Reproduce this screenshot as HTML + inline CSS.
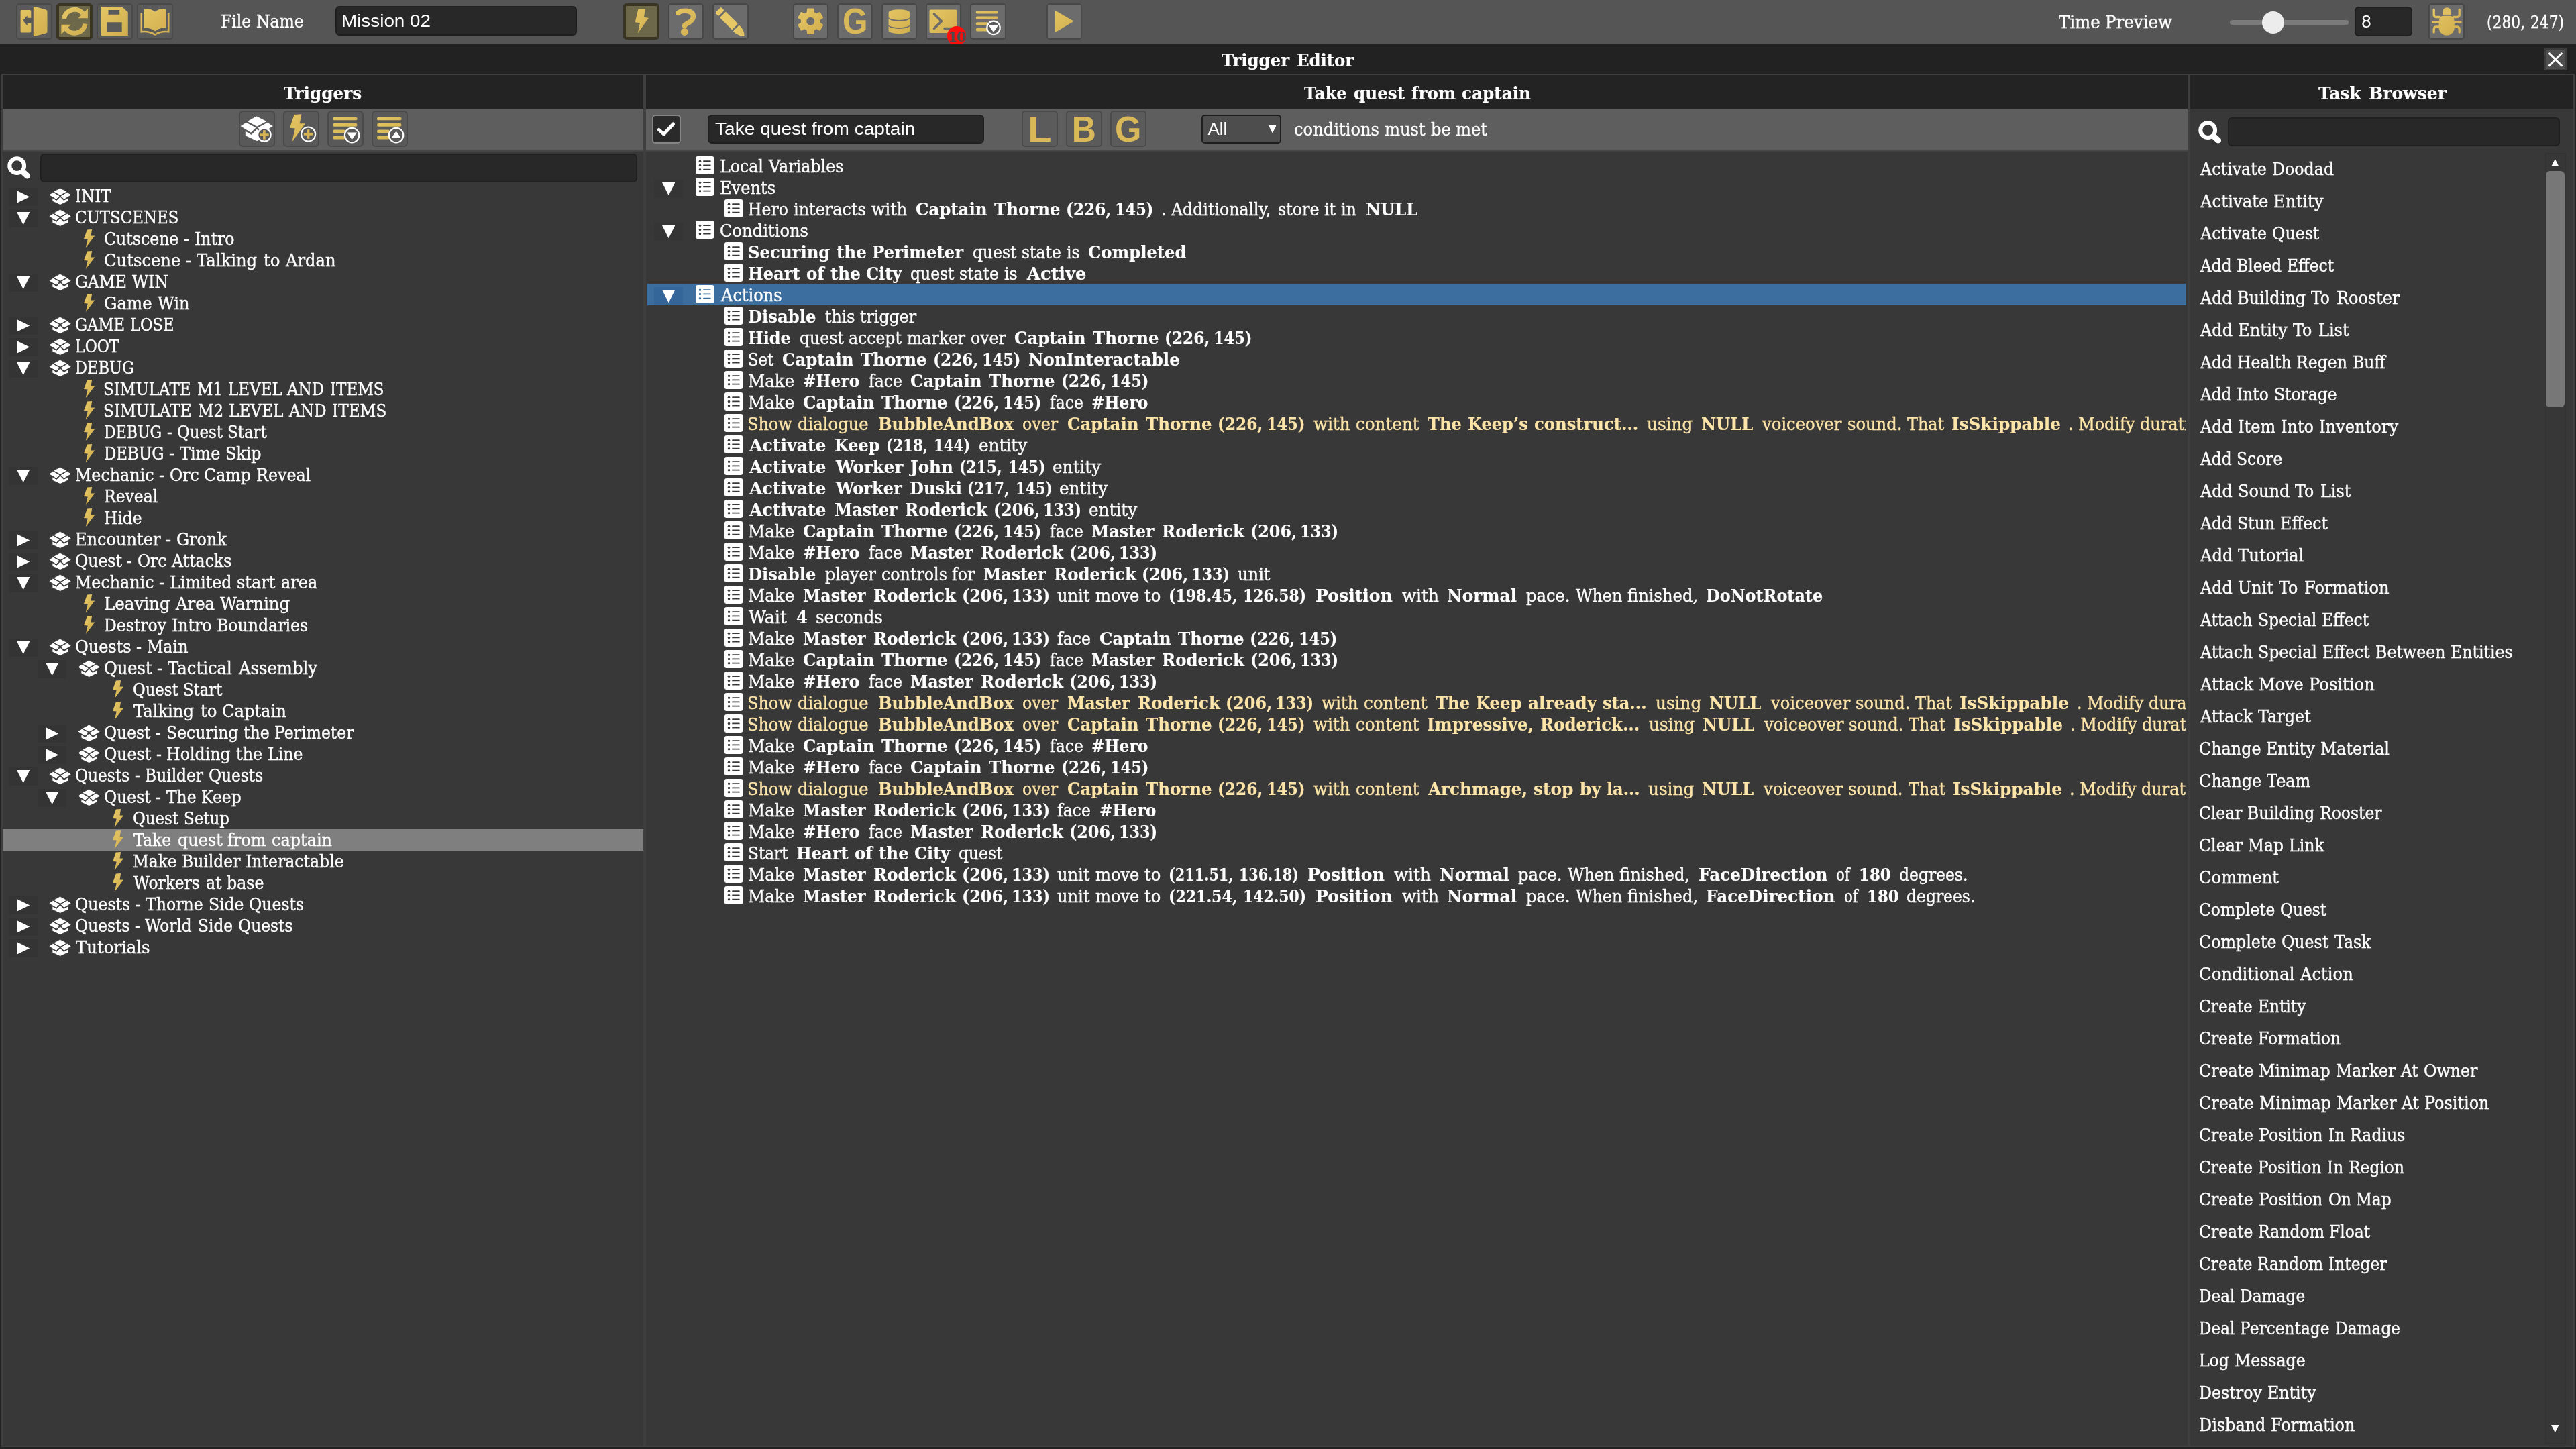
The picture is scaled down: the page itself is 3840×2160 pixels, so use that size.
<!DOCTYPE html>
<html lang="en"><head><meta charset="utf-8"><title>Trigger Editor</title>
<style>
html,body{margin:0;padding:0;background:#222222;}
body{width:3840px;height:2160px;position:relative;overflow:hidden;font-family:'DejaVu Serif','Liberation Serif',serif;color:#fff;}
.t{position:absolute;white-space:nowrap;transform-origin:0 50%;display:block;-webkit-text-stroke:0.45px currentColor;}
</style></head>
<body>
<svg width="0" height="0" style="position:absolute"><defs>
<linearGradient id="gold" gradientUnits="userSpaceOnUse" x1="4" y1="4" x2="50" y2="50"><stop offset="0" stop-color="#e6c866"/><stop offset="1" stop-color="#cfab4c"/></linearGradient>
<linearGradient id="golds" x1="0" y1="0" x2="1" y2="1"><stop offset="0" stop-color="#e6c866"/><stop offset="1" stop-color="#cfab4c"/></linearGradient>
</defs></svg>
<div id="app" style="position:absolute;left:0;top:0;width:3840px;height:2160px;will-change:transform">
<div style="position:absolute;left:0px;top:0px;width:3840px;height:65px;background:#555555;"></div>
<div style="position:absolute;left:24px;top:5px;width:53.5px;height:53.5px;box-sizing:border-box;background:#5a5a5a;border:2px solid #494949;border-radius:5px;overflow:hidden"></div>
<div style="position:absolute;left:84px;top:5px;width:53.5px;height:53.5px;box-sizing:border-box;background:#6d6849;border:4px solid #3a3422;border-radius:5px;overflow:hidden"></div>
<div style="position:absolute;left:144.3px;top:5px;width:53.5px;height:53.5px;box-sizing:border-box;background:#5a5a5a;border:2px solid #494949;border-radius:5px;overflow:hidden"></div>
<div style="position:absolute;left:204.3px;top:5px;width:53.5px;height:53.5px;box-sizing:border-box;background:#5a5a5a;border:2px solid #494949;border-radius:5px;overflow:hidden"></div>
<svg style="position:absolute;left:24px;top:5px;" width="54" height="54" viewBox="0 0 54 54"><path fill="url(#gold)" fill-rule="evenodd" d="M8.6 10.1 L20.3 10.1 Q22.3 10.1 22.3 12.1 L22.3 21.7 L16.7 21.7 L16.7 18.2 L10.2 25.8 L16.7 33.3 L16.7 29.8 L22.3 29.8 L22.3 41.4 Q22.3 43.4 20.3 43.4 L8.6 43.4 Q6.6 43.4 6.6 41.4 L6.6 12.1 Q6.6 10.1 8.6 10.1 Z"/><path fill="url(#gold)" d="M25.8 7 Q25.8 4.5 28.3 5 L44.5 9.5 Q46.5 10 46.5 12 L46.5 42 Q46.5 44 44.5 44.5 L28.3 48.7 Q25.8 49.2 25.8 46.7 Z"/></svg>
<svg style="position:absolute;left:84px;top:5px;" width="54" height="54" viewBox="0 0 54 54"><g fill="none" stroke="url(#gold)" stroke-width="7"><path d="M11.5 23 A16 16 0 0 1 40 15.5"/><path d="M43 30.5 A16 16 0 0 1 14.5 38"/></g><path fill="url(#gold)" d="M46.9 8 L46.9 22.3 L32.6 22.3 Z"/><path fill="url(#gold)" d="M7.4 46 L7.4 31.7 L21.7 31.7 Z"/></svg>
<svg style="position:absolute;left:144.3px;top:5px;" width="54" height="54" viewBox="0 0 54 54"><path fill="url(#gold)" fill-rule="evenodd" d="M7 5 L38 5 L46.8 13.5 L46.8 48 L7 48 Z M17.5 10 L17.5 16.7 L34.2 16.7 L34.2 10 Z M15.7 28.3 L15.7 43 L37.7 43 L37.7 28.3 Z"/></svg>
<svg style="position:absolute;left:204.3px;top:5px;" width="54" height="54" viewBox="0 0 54 54"><path fill="url(#gold)" d="M11 8.5 Q20 7 27 12.5 Q34 7 43 8.5 L43 37 Q34 36 27 41.5 Q20 36 11 37 Z"/><path fill="none" stroke="url(#gold)" stroke-width="2.6" d="M6.8 15 L6.8 42.3 Q18 41 27 46.5 Q36 41 47.2 42.3 L47.2 15"/></svg>
<span class="t" style="left:328.90px;top:0.3px;height:65px;line-height:65px;font-size:26px;transform:scaleX(0.9001);">File</span>
<span class="t" style="left:381.76px;top:0.3px;height:65px;line-height:65px;font-size:26px;transform:scaleX(0.9035);">Name</span>
<div style="position:absolute;left:500px;top:9px;width:360px;height:44px;box-sizing:border-box;background:#282828;border:2px solid #1e1e1e;border-radius:6px;overflow:hidden"></div>
<span class="t" style="left:509.36px;top:9.0px;height:44px;line-height:44px;font-size:26px;transform:scaleX(1.0705);font-family:'Liberation Sans','DejaVu Sans',sans-serif;-webkit-text-stroke-width:0;">Mission 02</span>
<div style="position:absolute;left:929px;top:5px;width:53.5px;height:53.5px;box-sizing:border-box;background:#6d6849;border:4px solid #3a3422;border-radius:5px;overflow:hidden"></div>
<div style="position:absolute;left:995.5px;top:5px;width:53.5px;height:53.5px;box-sizing:border-box;background:#6c6c6c;border:2px solid #484848;border-radius:5px;overflow:hidden"></div>
<div style="position:absolute;left:1062px;top:5px;width:53.5px;height:53.5px;box-sizing:border-box;background:#6c6c6c;border:2px solid #484848;border-radius:5px;overflow:hidden"></div>
<div style="position:absolute;left:1181.5px;top:5px;width:53.5px;height:53.5px;box-sizing:border-box;background:#6c6c6c;border:2px solid #484848;border-radius:5px;overflow:hidden"></div>
<div style="position:absolute;left:1247.5px;top:5px;width:53.5px;height:53.5px;box-sizing:border-box;background:#6c6c6c;border:2px solid #484848;border-radius:5px;overflow:hidden"></div>
<div style="position:absolute;left:1313.5px;top:5px;width:53.5px;height:53.5px;box-sizing:border-box;background:#6c6c6c;border:2px solid #484848;border-radius:5px;overflow:hidden"></div>
<div style="position:absolute;left:1379.7px;top:5px;width:53.5px;height:53.5px;box-sizing:border-box;background:#6c6c6c;border:2px solid #484848;border-radius:5px;overflow:hidden"></div>
<div style="position:absolute;left:1446px;top:5px;width:53.5px;height:53.5px;box-sizing:border-box;background:#6c6c6c;border:2px solid #484848;border-radius:5px;overflow:hidden"></div>
<div style="position:absolute;left:1559.5px;top:5px;width:53.5px;height:53.5px;box-sizing:border-box;background:#6c6c6c;border:2px solid #484848;border-radius:5px;overflow:hidden"></div>
<svg style="position:absolute;left:929px;top:5px;" width="54" height="54" viewBox="0 0 54 54"><path fill="url(#gold)" d="M22.3 9.1 L32.9 8.6 L30.9 20.7 L38 21.7 L21.8 44.5 L24.8 29.3 L17.7 28.3 Z"/></svg>
<svg style="position:absolute;left:995.5px;top:5px;" width="54" height="54" viewBox="0 0 54 54"><path fill="none" stroke="url(#gold)" stroke-width="7.4" stroke-linecap="round" d="M14.8 14.4 Q20 10.6 26.6 11.2 Q37.6 12 37.4 20.2 Q37 25.5 29.5 29.5 Q24.6 32 24.4 33.4"/><circle cx="24.4" cy="42.4" r="5.5" fill="url(#gold)"/></svg>
<svg style="position:absolute;left:1062px;top:5px;" width="54" height="54" viewBox="0 0 54 54"><g transform="translate(27.2,28.6) rotate(-45)" fill="url(#gold)"><rect x="-6.2" y="-26.5" width="12.4" height="7.2" rx="2.2"/><rect x="-6.2" y="-16.6" width="12.4" height="25.6" rx="1"/><path d="M-6.2 11.6 L6.2 11.6 L6.2 16 Q5 24 0.8 28 Q0 28.8 -0.8 28 Q-5 24 -6.2 16 Z"/></g></svg>
<svg style="position:absolute;left:1181.5px;top:5px;" width="54" height="54" viewBox="0 0 54 54"><path fill="url(#gold)" stroke="url(#gold)" stroke-width="2.5" stroke-linejoin="round" fill-rule="evenodd" d="M21.89 14.15 L22.29 8.84 L30.31 8.84 L30.71 14.15 L35.06 16.66 L39.84 14.35 L43.86 21.30 L39.46 24.29 L39.46 29.31 L43.86 32.30 L39.84 39.25 L35.06 36.94 L30.71 39.45 L30.31 44.76 L22.29 44.76 L21.89 39.45 L17.54 36.94 L12.76 39.25 L8.74 32.30 L13.14 29.31 L13.14 24.29 L8.74 21.30 L12.76 14.35 L17.54 16.66 Z M33.6 26.8 A7.3 7.3 0 1 0 19 26.8 A7.3 7.3 0 1 0 33.6 26.8 Z"/></svg>
<div style="position:absolute;left:1247.5px;top:5px;width:53.5px;height:53.5px;text-align:center;line-height:53px;font-family:'Liberation Sans','DejaVu Sans',sans-serif;font-weight:bold;font-size:54.5px;color:#d8b857;transform:scaleX(0.885)">G</div>
<svg style="position:absolute;left:1313.5px;top:5px;" width="54" height="54" viewBox="0 0 54 54"><path fill="url(#gold)" d="M10.599999999999998 14 A15.8 4.8 0 0 1 42.2 14 L42.2 20.2 A15.8 4.8 0 0 1 10.599999999999998 20.2 Z"/><path fill="url(#gold)" d="M10.599999999999998 22 A15.8 4.8 0 0 0 42.2 22 L42.2 31.4 A15.8 4.8 0 0 1 10.599999999999998 31.4 Z"/><path fill="url(#gold)" d="M10.599999999999998 33.2 A15.8 4.8 0 0 0 42.2 33.2 L42.2 40.4 A15.8 4.8 0 0 1 10.599999999999998 40.4 Z"/></svg>
<svg style="position:absolute;left:1379.7px;top:5px;" width="54" height="54" viewBox="0 0 54 54"><rect x="5.5" y="9.6" width="41.3" height="34.4" rx="2.5" fill="url(#gold)"/><path fill="none" stroke="#6c6c6c" stroke-width="3.6" stroke-linecap="round" stroke-linejoin="round" d="M12.5 16 L23.5 26.8 L12.5 37.5"/><path stroke="#6c6c6c" stroke-width="3.6" stroke-linecap="round" d="M28 37.5 L40 37.5"/></svg>
<svg style="position:absolute;left:1446px;top:5px;" width="54" height="54" viewBox="0 0 54 54"><rect x="8.8" y="10.899999999999999" width="33.2" height="4.6" rx="2.2" fill="url(#gold)"/><rect x="8.8" y="19.4" width="33.2" height="4.6" rx="2.2" fill="url(#gold)"/><rect x="8.8" y="28.2" width="18.7" height="4.6" rx="2.2" fill="url(#gold)"/><rect x="8.8" y="36.800000000000004" width="18.7" height="4.6" rx="2.2" fill="url(#gold)"/><circle cx="35" cy="36.4" r="9.700000000000001" fill="#5c5c5c" stroke="#fff" stroke-width="2.2"/><path fill="#fff" d="M27.6 32.4 L42.4 32.4 L35 43.0 Z"/></svg>
<svg style="position:absolute;left:1559.5px;top:5px;" width="54" height="54" viewBox="0 0 54 54"><path fill="url(#gold)" d="M12.6 10.6 L40.8 26.8 L12.6 43.4 Z"/></svg>
<div style="position:absolute;left:1411.8px;top:39.3px;width:28.4px;height:25.7px;overflow:hidden"><div style="width:28.4px;height:28.4px;border-radius:50%;background:#ff0e0e;text-align:center;line-height:32px;font-size:21px;font-weight:bold;color:#4b4b4b;letter-spacing:-1.5px;font-family:'DejaVu Serif','Liberation Serif',serif">10</div></div>
<span class="t" style="left:3068.60px;top:0.7px;height:65px;line-height:65px;font-size:26px;transform:scaleX(0.9401);">Time</span>
<span class="t" style="left:3138.47px;top:0.7px;height:65px;line-height:65px;font-size:26px;transform:scaleX(0.9450);">Preview</span>
<div style="position:absolute;left:3324px;top:30px;width:177px;height:7.4px;background:#7b7b7b;border-radius:4px"></div>
<div style="position:absolute;left:3371.6px;top:16.7px;width:33.6px;height:33.6px;background:#ececec;border-radius:50%"></div>
<div style="position:absolute;left:3510px;top:10px;width:86px;height:44px;box-sizing:border-box;background:#282828;border:2px solid #1e1e1e;border-radius:6px;overflow:hidden"></div>
<span class="t" style="left:3520.20px;top:10.0px;height:44px;line-height:44px;font-size:26px;transform:scaleX(1.0000);font-family:'Liberation Sans','DejaVu Sans',sans-serif;-webkit-text-stroke-width:0;">8</span>
<div style="position:absolute;left:3620.3px;top:5px;width:53.5px;height:53.5px;box-sizing:border-box;background:#6c6c6c;border:2px solid #484848;border-radius:5px;overflow:hidden"></div>
<svg style="position:absolute;left:3620.3px;top:5px;" width="54" height="54" viewBox="0 0 54 54"><path fill="url(#gold)" d="M21.2 17.4 L21.2 12.5 A6.3 6.3 0 0 1 33.8 12.5 L33.8 17.4 Z"/><path fill="url(#gold)" d="M15.6 30 Q15.6 18.8 22 18.8 L32.4 18.8 Q38.8 18.8 38.8 30 L38.8 36 A11.6 11.6 0 0 1 15.6 36 Z"/><g fill="none" stroke="url(#gold)" stroke-width="3.3" stroke-linecap="round" stroke-linejoin="round"><path d="M8.2 9.5 L8.2 17 Q8.2 20.5 12 20.5 L17 20.5"/><path d="M46.2 9.5 L46.2 17 Q46.2 20.5 42.4 20.5 L37.4 20.5"/><path d="M6.5 28 L16 28"/><path d="M38.4 28 L48 28"/><path d="M8.2 43 L8.2 39 Q8.2 35 12 35 L17 35"/><path d="M46.2 43 L46.2 39 Q46.2 35 42.4 35 L37.4 35"/></g></svg>
<span class="t" style="left:3706.82px;top:1.0px;height:65px;line-height:65px;font-size:26px;transform:scaleX(0.8402);">(280,</span>
<span class="t" style="left:3771.59px;top:1.0px;height:65px;line-height:65px;font-size:26px;transform:scaleX(0.8354);">247)</span>
<span class="t" style="left:1821.40px;top:67.9px;height:44px;line-height:44px;font-size:26px;transform:scaleX(0.9385);font-weight:bold;-webkit-text-stroke-width:0.2px;">Trigger</span>
<span class="t" style="left:1933.08px;top:67.9px;height:44px;line-height:44px;font-size:26px;transform:scaleX(0.9362);font-weight:bold;-webkit-text-stroke-width:0.2px;">Editor</span>
<div style="position:absolute;left:3793px;top:72px;width:32.5px;height:33px;box-sizing:border-box;background:#4f4f4f;border:2px solid #3c3c3c;border-radius:0px;overflow:hidden"><svg width="29" height="29" viewBox="0 0 29 29" style="position:absolute;left:0;top:0"><path d="M4.5 5 L24.3 24.5 M24.3 5 L4.5 24.5" stroke="#fff" stroke-width="3"/></svg></div>
<div style="position:absolute;left:2px;top:110px;width:959px;height:2047px;background:#383838;box-sizing:border-box;border:2px solid #3f3f3f"></div>
<div style="position:absolute;left:4px;top:112px;width:955px;height:50px;background:#232323;"></div>
<div style="position:absolute;left:961px;top:110px;width:2302px;height:2047px;background:#383838;box-sizing:border-box;border:2px solid #3f3f3f"></div>
<div style="position:absolute;left:963px;top:112px;width:2298px;height:50px;background:#232323;"></div>
<div style="position:absolute;left:3263px;top:110px;width:575px;height:2047px;background:#383838;box-sizing:border-box;border:2px solid #3f3f3f"></div>
<div style="position:absolute;left:3265px;top:112px;width:571px;height:50px;background:#232323;"></div>
<div style="position:absolute;left:4px;top:162px;width:955px;height:61px;background:#5e5e5e;"></div>
<div style="position:absolute;left:4px;top:223px;width:955px;height:3px;background:linear-gradient(#505050,#404040);"></div>
<div style="position:absolute;left:963px;top:162px;width:2298px;height:61px;background:#5e5e5e;"></div>
<div style="position:absolute;left:963px;top:223px;width:2298px;height:3px;background:linear-gradient(#505050,#404040);"></div>
<span class="t" style="left:423.00px;top:113.8px;height:50px;line-height:50px;font-size:26px;transform:scaleX(0.9496);font-weight:bold;-webkit-text-stroke-width:0.2px;">Triggers</span>
<span class="t" style="left:1943.50px;top:113.8px;height:50px;line-height:50px;font-size:26px;transform:scaleX(0.9337);font-weight:bold;-webkit-text-stroke-width:0.2px;">Take</span>
<span class="t" style="left:2018.46px;top:113.8px;height:50px;line-height:50px;font-size:26px;transform:scaleX(0.9487);font-weight:bold;-webkit-text-stroke-width:0.2px;">quest</span>
<span class="t" style="left:2103.51px;top:113.8px;height:50px;line-height:50px;font-size:26px;transform:scaleX(0.9487);font-weight:bold;-webkit-text-stroke-width:0.2px;">from</span>
<span class="t" style="left:2178.57px;top:113.8px;height:50px;line-height:50px;font-size:26px;transform:scaleX(0.9487);font-weight:bold;-webkit-text-stroke-width:0.2px;">captain</span>
<span class="t" style="left:3456.00px;top:113.8px;height:50px;line-height:50px;font-size:26px;transform:scaleX(0.9581);font-weight:bold;-webkit-text-stroke-width:0.2px;">Task</span>
<span class="t" style="left:3531.10px;top:113.8px;height:50px;line-height:50px;font-size:26px;transform:scaleX(0.9637);font-weight:bold;-webkit-text-stroke-width:0.2px;">Browser</span>
<div style="position:absolute;left:356.2px;top:165px;width:53.6px;height:53.6px;box-sizing:border-box;background:#595959;border:2px solid #4a4a4a;border-radius:6px;overflow:hidden"></div>
<div style="position:absolute;left:422.2px;top:165px;width:53.6px;height:53.6px;box-sizing:border-box;background:#595959;border:2px solid #4a4a4a;border-radius:6px;overflow:hidden"></div>
<div style="position:absolute;left:488.2px;top:165px;width:53.6px;height:53.6px;box-sizing:border-box;background:#595959;border:2px solid #4a4a4a;border-radius:6px;overflow:hidden"></div>
<div style="position:absolute;left:554.2px;top:165px;width:53.6px;height:53.6px;box-sizing:border-box;background:#595959;border:2px solid #4a4a4a;border-radius:6px;overflow:hidden"></div>
<svg style="position:absolute;left:356.2px;top:165px;" width="54" height="54" viewBox="0 0 54 54"><g transform="translate(2.6,8.2) scale(1.5)"><path fill="#fff" stroke="#595959" stroke-width="0.8" stroke-linejoin="round" d="M16 -0.4 L26.6 5.2 L16.3 10.8 L5.9 5.2 Z"/><path fill="#fff" stroke="#595959" stroke-width="0.8" stroke-linejoin="round" d="M5.6 5.8 L15.8 11.4 L10.4 16.8 L0.2 10.6 Q-0.6 10 0.2 9.4 Z"/><path fill="#fff" stroke="#595959" stroke-width="0.8" stroke-linejoin="round" d="M26.8 5.8 L32 9.4 Q32.8 10 32 10.6 L22 16.8 L16.6 11.4 Z"/><path fill="#fff" stroke="#595959" stroke-width="0.8" stroke-linejoin="round" d="M4.4 14.2 L10.7 18 L16.2 12.5 L21.7 18 L28 14.2 L28 19.5 L16.2 25 L4.4 19.5 Z"/></g><circle cx="37.9" cy="36" r="9.700000000000001" fill="#595959" stroke="#fff" stroke-width="2.2"/><path d="M31.099999999999998 36 L44.699999999999996 36 M37.9 29.2 L37.9 42.8" stroke="url(#gold)" stroke-width="3.6"/></svg>
<svg style="position:absolute;left:422.2px;top:165px;" width="54" height="54" viewBox="0 0 54 54"><path fill="url(#gold)" d="M16.5 6 L27.5 5.2 L24.7 19.3 L33 19.3 L13.3 46.5 L17.8 26.5 L10 25.8 Z"/><circle cx="37.6" cy="35" r="10.5" fill="#595959" stroke="#fff" stroke-width="2.2"/><path d="M30.8 35 L44.4 35 M37.6 28.2 L37.6 41.8" stroke="url(#gold)" stroke-width="3.6"/></svg>
<svg style="position:absolute;left:488.2px;top:165px;" width="54" height="54" viewBox="0 0 54 54"><rect x="8" y="9.65" width="36.5" height="4.7" rx="2.2" fill="url(#gold)"/><rect x="8" y="19.049999999999997" width="36.5" height="4.7" rx="2.2" fill="url(#gold)"/><rect x="8" y="28.45" width="19" height="4.7" rx="2.2" fill="url(#gold)"/><rect x="8" y="37.85" width="19" height="4.7" rx="2.2" fill="url(#gold)"/><circle cx="36.6" cy="36.6" r="10.700000000000001" fill="#595959" stroke="#fff" stroke-width="2.2"/><path fill="#fff" d="M29.200000000000003 32.6 L44.0 32.6 L36.6 43.2 Z"/></svg>
<svg style="position:absolute;left:554.2px;top:165px;" width="54" height="54" viewBox="0 0 54 54"><rect x="8" y="9.65" width="36.5" height="4.7" rx="2.2" fill="url(#gold)"/><rect x="8" y="19.049999999999997" width="36.5" height="4.7" rx="2.2" fill="url(#gold)"/><rect x="8" y="28.45" width="19" height="4.7" rx="2.2" fill="url(#gold)"/><rect x="8" y="37.85" width="19" height="4.7" rx="2.2" fill="url(#gold)"/><circle cx="36.6" cy="36.6" r="10.700000000000001" fill="#595959" stroke="#fff" stroke-width="2.2"/><path fill="#fff" d="M36.6 30.6 L44.0 41.0 L29.200000000000003 41.0 Z"/></svg>
<svg style="position:absolute;left:10.5px;top:233.2px;" width="40" height="38" viewBox="0 0 40 38"><circle cx="14.2" cy="14.2" r="10.9" fill="none" stroke="#fff" stroke-width="6"/><path d="M23 23 L29.8 29.2" stroke="#fff" stroke-width="8.6" stroke-linecap="round"/></svg>
<div style="position:absolute;left:60px;top:229px;width:890px;height:42.6px;box-sizing:border-box;background:#282828;border:2px solid #202020;border-radius:6px;overflow:hidden"></div>
<div style="position:absolute;left:12.8px;top:280.1px;width:43px;height:27px;background:#343434;"></div><svg style="position:absolute;left:24.800000000000004px;top:284.20000000000005px;" width="19.2" height="18.8" viewBox="0 0 19.2 18.8"><path fill="#fff" d="M0 0 L19.2 9.4 L0 18.8 Z"/></svg>
<svg style="position:absolute;left:72.8px;top:280.2px;" width="33.4" height="26" viewBox="-0.5 -0.5 33.4 26"><path fill="#fff" stroke="#383838" stroke-width="0.9" stroke-linejoin="round" d="M16 -0.4 L26.6 5.2 L16.3 10.8 L5.9 5.2 Z"/><path fill="#fff" stroke="#383838" stroke-width="0.9" stroke-linejoin="round" d="M5.6 5.8 L15.8 11.4 L10.4 16.8 L0.2 10.6 Q-0.6 10 0.2 9.4 Z"/><path fill="#fff" stroke="#383838" stroke-width="0.9" stroke-linejoin="round" d="M26.8 5.8 L32 9.4 Q32.8 10 32 10.6 L22 16.8 L16.6 11.4 Z"/><path fill="#fff" stroke="#383838" stroke-width="0.9" stroke-linejoin="round" d="M4.4 14.2 L10.7 18 L16.2 12.5 L21.7 18 L28 14.2 L28 19.5 L16.2 25 L4.4 19.5 Z"/></svg>
<span class="t" style="left:111.72px;top:276.2px;height:32px;line-height:32px;font-size:26px;transform:scaleX(0.8840);">INIT</span>
<div style="position:absolute;left:12.8px;top:312.1px;width:43px;height:27px;background:#343434;"></div><svg style="position:absolute;left:24.700000000000006px;top:316.0px;" width="19.4" height="19.2" viewBox="0 0 19.4 19.2"><path fill="#fff" d="M0 0 L19.4 0 L9.7 19.2 Z"/></svg>
<svg style="position:absolute;left:72.8px;top:312.2px;" width="33.4" height="26" viewBox="-0.5 -0.5 33.4 26"><path fill="#fff" stroke="#383838" stroke-width="0.9" stroke-linejoin="round" d="M16 -0.4 L26.6 5.2 L16.3 10.8 L5.9 5.2 Z"/><path fill="#fff" stroke="#383838" stroke-width="0.9" stroke-linejoin="round" d="M5.6 5.8 L15.8 11.4 L10.4 16.8 L0.2 10.6 Q-0.6 10 0.2 9.4 Z"/><path fill="#fff" stroke="#383838" stroke-width="0.9" stroke-linejoin="round" d="M26.8 5.8 L32 9.4 Q32.8 10 32 10.6 L22 16.8 L16.6 11.4 Z"/><path fill="#fff" stroke="#383838" stroke-width="0.9" stroke-linejoin="round" d="M4.4 14.2 L10.7 18 L16.2 12.5 L21.7 18 L28 14.2 L28 19.5 L16.2 25 L4.4 19.5 Z"/></svg>
<span class="t" style="left:111.72px;top:308.2px;height:32px;line-height:32px;font-size:26px;transform:scaleX(0.8808);">CUTSCENES</span>
<svg style="position:absolute;left:125.2px;top:341.9px;" width="16.5" height="27.5" viewBox="0 0 16.5 27.5"><path fill="url(#golds)" d="M4.9 0.4 L12.1 0 L10.6 9.5 L16.3 9.5 L2.7 27.3 L5.7 14.4 L0 14 Z"/></svg>
<span class="t" style="left:154.89px;top:340.2px;height:32px;line-height:32px;font-size:26px;transform:scaleX(0.9088);">Cutscene</span>
<span class="t" style="left:274.03px;top:340.2px;height:32px;line-height:32px;font-size:26px;transform:scaleX(0.8968);">-</span>
<span class="t" style="left:289.71px;top:340.2px;height:32px;line-height:32px;font-size:26px;transform:scaleX(0.9091);">Intro</span>
<svg style="position:absolute;left:125.2px;top:373.9px;" width="16.5" height="27.5" viewBox="0 0 16.5 27.5"><path fill="url(#golds)" d="M4.9 0.4 L12.1 0 L10.6 9.5 L16.3 9.5 L2.7 27.3 L5.7 14.4 L0 14 Z"/></svg>
<span class="t" style="left:154.87px;top:372.2px;height:32px;line-height:32px;font-size:26px;transform:scaleX(0.9331);">Cutscene</span>
<span class="t" style="left:277.19px;top:372.2px;height:32px;line-height:32px;font-size:26px;transform:scaleX(0.9208);">-</span>
<span class="t" style="left:293.28px;top:372.2px;height:32px;line-height:32px;font-size:26px;transform:scaleX(0.9324);">Talking</span>
<span class="t" style="left:393.24px;top:372.2px;height:32px;line-height:32px;font-size:26px;transform:scaleX(0.9411);">to</span>
<span class="t" style="left:425.82px;top:372.2px;height:32px;line-height:32px;font-size:26px;transform:scaleX(0.9295);">Ardan</span>
<div style="position:absolute;left:12.8px;top:408.1px;width:43px;height:27px;background:#343434;"></div><svg style="position:absolute;left:24.700000000000006px;top:412.0px;" width="19.4" height="19.2" viewBox="0 0 19.4 19.2"><path fill="#fff" d="M0 0 L19.4 0 L9.7 19.2 Z"/></svg>
<svg style="position:absolute;left:72.8px;top:408.2px;" width="33.4" height="26" viewBox="-0.5 -0.5 33.4 26"><path fill="#fff" stroke="#383838" stroke-width="0.9" stroke-linejoin="round" d="M16 -0.4 L26.6 5.2 L16.3 10.8 L5.9 5.2 Z"/><path fill="#fff" stroke="#383838" stroke-width="0.9" stroke-linejoin="round" d="M5.6 5.8 L15.8 11.4 L10.4 16.8 L0.2 10.6 Q-0.6 10 0.2 9.4 Z"/><path fill="#fff" stroke="#383838" stroke-width="0.9" stroke-linejoin="round" d="M26.8 5.8 L32 9.4 Q32.8 10 32 10.6 L22 16.8 L16.6 11.4 Z"/><path fill="#fff" stroke="#383838" stroke-width="0.9" stroke-linejoin="round" d="M4.4 14.2 L10.7 18 L16.2 12.5 L21.7 18 L28 14.2 L28 19.5 L16.2 25 L4.4 19.5 Z"/></svg>
<span class="t" style="left:111.70px;top:404.2px;height:32px;line-height:32px;font-size:26px;transform:scaleX(0.9046);">GAME</span>
<span class="t" style="left:196.85px;top:404.2px;height:32px;line-height:32px;font-size:26px;transform:scaleX(0.9046);">WIN</span>
<svg style="position:absolute;left:125.2px;top:437.9px;" width="16.5" height="27.5" viewBox="0 0 16.5 27.5"><path fill="url(#golds)" d="M4.9 0.4 L12.1 0 L10.6 9.5 L16.3 9.5 L2.7 27.3 L5.7 14.4 L0 14 Z"/></svg>
<span class="t" style="left:154.86px;top:436.2px;height:32px;line-height:32px;font-size:26px;transform:scaleX(0.9386);">Game</span>
<span class="t" style="left:234.59px;top:436.2px;height:32px;line-height:32px;font-size:26px;transform:scaleX(0.9264);">Win</span>
<div style="position:absolute;left:12.8px;top:472.1px;width:43px;height:27px;background:#343434;"></div><svg style="position:absolute;left:24.800000000000004px;top:476.20000000000005px;" width="19.2" height="18.8" viewBox="0 0 19.2 18.8"><path fill="#fff" d="M0 0 L19.2 9.4 L0 18.8 Z"/></svg>
<svg style="position:absolute;left:72.8px;top:472.2px;" width="33.4" height="26" viewBox="-0.5 -0.5 33.4 26"><path fill="#fff" stroke="#383838" stroke-width="0.9" stroke-linejoin="round" d="M16 -0.4 L26.6 5.2 L16.3 10.8 L5.9 5.2 Z"/><path fill="#fff" stroke="#383838" stroke-width="0.9" stroke-linejoin="round" d="M5.6 5.8 L15.8 11.4 L10.4 16.8 L0.2 10.6 Q-0.6 10 0.2 9.4 Z"/><path fill="#fff" stroke="#383838" stroke-width="0.9" stroke-linejoin="round" d="M26.8 5.8 L32 9.4 Q32.8 10 32 10.6 L22 16.8 L16.6 11.4 Z"/><path fill="#fff" stroke="#383838" stroke-width="0.9" stroke-linejoin="round" d="M4.4 14.2 L10.7 18 L16.2 12.5 L21.7 18 L28 14.2 L28 19.5 L16.2 25 L4.4 19.5 Z"/></svg>
<span class="t" style="left:111.73px;top:468.2px;height:32px;line-height:32px;font-size:26px;transform:scaleX(0.8696);">GAME</span>
<span class="t" style="left:193.59px;top:468.2px;height:32px;line-height:32px;font-size:26px;transform:scaleX(0.8696);">LOSE</span>
<div style="position:absolute;left:12.8px;top:504.1px;width:43px;height:27px;background:#343434;"></div><svg style="position:absolute;left:24.800000000000004px;top:508.20000000000005px;" width="19.2" height="18.8" viewBox="0 0 19.2 18.8"><path fill="#fff" d="M0 0 L19.2 9.4 L0 18.8 Z"/></svg>
<svg style="position:absolute;left:72.8px;top:504.2px;" width="33.4" height="26" viewBox="-0.5 -0.5 33.4 26"><path fill="#fff" stroke="#383838" stroke-width="0.9" stroke-linejoin="round" d="M16 -0.4 L26.6 5.2 L16.3 10.8 L5.9 5.2 Z"/><path fill="#fff" stroke="#383838" stroke-width="0.9" stroke-linejoin="round" d="M5.6 5.8 L15.8 11.4 L10.4 16.8 L0.2 10.6 Q-0.6 10 0.2 9.4 Z"/><path fill="#fff" stroke="#383838" stroke-width="0.9" stroke-linejoin="round" d="M26.8 5.8 L32 9.4 Q32.8 10 32 10.6 L22 16.8 L16.6 11.4 Z"/><path fill="#fff" stroke="#383838" stroke-width="0.9" stroke-linejoin="round" d="M4.4 14.2 L10.7 18 L16.2 12.5 L21.7 18 L28 14.2 L28 19.5 L16.2 25 L4.4 19.5 Z"/></svg>
<span class="t" style="left:111.75px;top:500.2px;height:32px;line-height:32px;font-size:26px;transform:scaleX(0.8479);">LOOT</span>
<div style="position:absolute;left:12.8px;top:536.1px;width:43px;height:27px;background:#343434;"></div><svg style="position:absolute;left:24.700000000000006px;top:540.0px;" width="19.4" height="19.2" viewBox="0 0 19.4 19.2"><path fill="#fff" d="M0 0 L19.4 0 L9.7 19.2 Z"/></svg>
<svg style="position:absolute;left:72.8px;top:536.2px;" width="33.4" height="26" viewBox="-0.5 -0.5 33.4 26"><path fill="#fff" stroke="#383838" stroke-width="0.9" stroke-linejoin="round" d="M16 -0.4 L26.6 5.2 L16.3 10.8 L5.9 5.2 Z"/><path fill="#fff" stroke="#383838" stroke-width="0.9" stroke-linejoin="round" d="M5.6 5.8 L15.8 11.4 L10.4 16.8 L0.2 10.6 Q-0.6 10 0.2 9.4 Z"/><path fill="#fff" stroke="#383838" stroke-width="0.9" stroke-linejoin="round" d="M26.8 5.8 L32 9.4 Q32.8 10 32 10.6 L22 16.8 L16.6 11.4 Z"/><path fill="#fff" stroke="#383838" stroke-width="0.9" stroke-linejoin="round" d="M4.4 14.2 L10.7 18 L16.2 12.5 L21.7 18 L28 14.2 L28 19.5 L16.2 25 L4.4 19.5 Z"/></svg>
<span class="t" style="left:111.73px;top:532.2px;height:32px;line-height:32px;font-size:26px;transform:scaleX(0.8670);">DEBUG</span>
<svg style="position:absolute;left:125.2px;top:565.9px;" width="16.5" height="27.5" viewBox="0 0 16.5 27.5"><path fill="url(#golds)" d="M4.9 0.4 L12.1 0 L10.6 9.5 L16.3 9.5 L2.7 27.3 L5.7 14.4 L0 14 Z"/></svg>
<span class="t" style="left:154.03px;top:564.2px;height:32px;line-height:32px;font-size:26px;transform:scaleX(0.8852);">SIMULATE</span>
<span class="t" style="left:293.85px;top:564.2px;height:32px;line-height:32px;font-size:26px;transform:scaleX(0.8773);">M1</span>
<span class="t" style="left:339.67px;top:564.2px;height:32px;line-height:32px;font-size:26px;transform:scaleX(0.8852);">LEVEL</span>
<span class="t" style="left:428.40px;top:564.2px;height:32px;line-height:32px;font-size:26px;transform:scaleX(0.8852);">AND</span>
<span class="t" style="left:491.56px;top:564.2px;height:32px;line-height:32px;font-size:26px;transform:scaleX(0.8852);">ITEMS</span>
<svg style="position:absolute;left:125.2px;top:597.9px;" width="16.5" height="27.5" viewBox="0 0 16.5 27.5"><path fill="url(#golds)" d="M4.9 0.4 L12.1 0 L10.6 9.5 L16.3 9.5 L2.7 27.3 L5.7 14.4 L0 14 Z"/></svg>
<span class="t" style="left:154.01px;top:596.2px;height:32px;line-height:32px;font-size:26px;transform:scaleX(0.8930);">SIMULATE</span>
<span class="t" style="left:295.07px;top:596.2px;height:32px;line-height:32px;font-size:26px;transform:scaleX(0.8850);">M2</span>
<span class="t" style="left:341.29px;top:596.2px;height:32px;line-height:32px;font-size:26px;transform:scaleX(0.8930);">LEVEL</span>
<span class="t" style="left:430.81px;top:596.2px;height:32px;line-height:32px;font-size:26px;transform:scaleX(0.8930);">AND</span>
<span class="t" style="left:494.53px;top:596.2px;height:32px;line-height:32px;font-size:26px;transform:scaleX(0.8930);">ITEMS</span>
<svg style="position:absolute;left:125.2px;top:629.9px;" width="16.5" height="27.5" viewBox="0 0 16.5 27.5"><path fill="url(#golds)" d="M4.9 0.4 L12.1 0 L10.6 9.5 L16.3 9.5 L2.7 27.3 L5.7 14.4 L0 14 Z"/></svg>
<span class="t" style="left:154.95px;top:628.2px;height:32px;line-height:32px;font-size:26px;transform:scaleX(0.8465);">DEBUG</span>
<span class="t" style="left:248.57px;top:628.2px;height:32px;line-height:32px;font-size:26px;transform:scaleX(0.8741);">-</span>
<span class="t" style="left:263.85px;top:628.2px;height:32px;line-height:32px;font-size:26px;transform:scaleX(0.8804);">Quest</span>
<span class="t" style="left:339.46px;top:628.2px;height:32px;line-height:32px;font-size:26px;transform:scaleX(0.8809);">Start</span>
<svg style="position:absolute;left:125.2px;top:661.9px;" width="16.5" height="27.5" viewBox="0 0 16.5 27.5"><path fill="url(#golds)" d="M4.9 0.4 L12.1 0 L10.6 9.5 L16.3 9.5 L2.7 27.3 L5.7 14.4 L0 14 Z"/></svg>
<span class="t" style="left:154.92px;top:660.2px;height:32px;line-height:32px;font-size:26px;transform:scaleX(0.8812);">DEBUG</span>
<span class="t" style="left:252.38px;top:660.2px;height:32px;line-height:32px;font-size:26px;transform:scaleX(0.9100);">-</span>
<span class="t" style="left:268.28px;top:660.2px;height:32px;line-height:32px;font-size:26px;transform:scaleX(0.9172);">Time</span>
<span class="t" style="left:336.46px;top:660.2px;height:32px;line-height:32px;font-size:26px;transform:scaleX(0.9152);">Skip</span>
<div style="position:absolute;left:12.8px;top:696.1px;width:43px;height:27px;background:#343434;"></div><svg style="position:absolute;left:24.700000000000006px;top:700.0px;" width="19.4" height="19.2" viewBox="0 0 19.4 19.2"><path fill="#fff" d="M0 0 L19.4 0 L9.7 19.2 Z"/></svg>
<svg style="position:absolute;left:72.8px;top:696.2px;" width="33.4" height="26" viewBox="-0.5 -0.5 33.4 26"><path fill="#fff" stroke="#383838" stroke-width="0.9" stroke-linejoin="round" d="M16 -0.4 L26.6 5.2 L16.3 10.8 L5.9 5.2 Z"/><path fill="#fff" stroke="#383838" stroke-width="0.9" stroke-linejoin="round" d="M5.6 5.8 L15.8 11.4 L10.4 16.8 L0.2 10.6 Q-0.6 10 0.2 9.4 Z"/><path fill="#fff" stroke="#383838" stroke-width="0.9" stroke-linejoin="round" d="M26.8 5.8 L32 9.4 Q32.8 10 32 10.6 L22 16.8 L16.6 11.4 Z"/><path fill="#fff" stroke="#383838" stroke-width="0.9" stroke-linejoin="round" d="M4.4 14.2 L10.7 18 L16.2 12.5 L21.7 18 L28 14.2 L28 19.5 L16.2 25 L4.4 19.5 Z"/></svg>
<span class="t" style="left:111.69px;top:692.2px;height:32px;line-height:32px;font-size:26px;transform:scaleX(0.9146);">Mechanic</span>
<span class="t" style="left:237.03px;top:692.2px;height:32px;line-height:32px;font-size:26px;transform:scaleX(0.9047);">-</span>
<span class="t" style="left:252.85px;top:692.2px;height:32px;line-height:32px;font-size:26px;transform:scaleX(0.9033);">Orc</span>
<span class="t" style="left:304.35px;top:692.2px;height:32px;line-height:32px;font-size:26px;transform:scaleX(0.9121);">Camp</span>
<span class="t" style="left:382.17px;top:692.2px;height:32px;line-height:32px;font-size:26px;transform:scaleX(0.9140);">Reveal</span>
<svg style="position:absolute;left:125.2px;top:725.9px;" width="16.5" height="27.5" viewBox="0 0 16.5 27.5"><path fill="url(#golds)" d="M4.9 0.4 L12.1 0 L10.6 9.5 L16.3 9.5 L2.7 27.3 L5.7 14.4 L0 14 Z"/></svg>
<span class="t" style="left:154.90px;top:724.2px;height:32px;line-height:32px;font-size:26px;transform:scaleX(0.9025);">Reveal</span>
<svg style="position:absolute;left:125.2px;top:757.9px;" width="16.5" height="27.5" viewBox="0 0 16.5 27.5"><path fill="url(#golds)" d="M4.9 0.4 L12.1 0 L10.6 9.5 L16.3 9.5 L2.7 27.3 L5.7 14.4 L0 14 Z"/></svg>
<span class="t" style="left:154.90px;top:756.2px;height:32px;line-height:32px;font-size:26px;transform:scaleX(0.8989);">Hide</span>
<div style="position:absolute;left:12.8px;top:792.1px;width:43px;height:27px;background:#343434;"></div><svg style="position:absolute;left:24.800000000000004px;top:796.2px;" width="19.2" height="18.8" viewBox="0 0 19.2 18.8"><path fill="#fff" d="M0 0 L19.2 9.4 L0 18.8 Z"/></svg>
<svg style="position:absolute;left:72.8px;top:792.2px;" width="33.4" height="26" viewBox="-0.5 -0.5 33.4 26"><path fill="#fff" stroke="#383838" stroke-width="0.9" stroke-linejoin="round" d="M16 -0.4 L26.6 5.2 L16.3 10.8 L5.9 5.2 Z"/><path fill="#fff" stroke="#383838" stroke-width="0.9" stroke-linejoin="round" d="M5.6 5.8 L15.8 11.4 L10.4 16.8 L0.2 10.6 Q-0.6 10 0.2 9.4 Z"/><path fill="#fff" stroke="#383838" stroke-width="0.9" stroke-linejoin="round" d="M26.8 5.8 L32 9.4 Q32.8 10 32 10.6 L22 16.8 L16.6 11.4 Z"/><path fill="#fff" stroke="#383838" stroke-width="0.9" stroke-linejoin="round" d="M4.4 14.2 L10.7 18 L16.2 12.5 L21.7 18 L28 14.2 L28 19.5 L16.2 25 L4.4 19.5 Z"/></svg>
<span class="t" style="left:111.67px;top:788.2px;height:32px;line-height:32px;font-size:26px;transform:scaleX(0.9262);">Encounter</span>
<span class="t" style="left:247.14px;top:788.2px;height:32px;line-height:32px;font-size:26px;transform:scaleX(0.9127);">-</span>
<span class="t" style="left:263.10px;top:788.2px;height:32px;line-height:32px;font-size:26px;transform:scaleX(0.9204);">Gronk</span>
<div style="position:absolute;left:12.8px;top:824.1px;width:43px;height:27px;background:#343434;"></div><svg style="position:absolute;left:24.800000000000004px;top:828.2px;" width="19.2" height="18.8" viewBox="0 0 19.2 18.8"><path fill="#fff" d="M0 0 L19.2 9.4 L0 18.8 Z"/></svg>
<svg style="position:absolute;left:72.8px;top:824.2px;" width="33.4" height="26" viewBox="-0.5 -0.5 33.4 26"><path fill="#fff" stroke="#383838" stroke-width="0.9" stroke-linejoin="round" d="M16 -0.4 L26.6 5.2 L16.3 10.8 L5.9 5.2 Z"/><path fill="#fff" stroke="#383838" stroke-width="0.9" stroke-linejoin="round" d="M5.6 5.8 L15.8 11.4 L10.4 16.8 L0.2 10.6 Q-0.6 10 0.2 9.4 Z"/><path fill="#fff" stroke="#383838" stroke-width="0.9" stroke-linejoin="round" d="M26.8 5.8 L32 9.4 Q32.8 10 32 10.6 L22 16.8 L16.6 11.4 Z"/><path fill="#fff" stroke="#383838" stroke-width="0.9" stroke-linejoin="round" d="M4.4 14.2 L10.7 18 L16.2 12.5 L21.7 18 L28 14.2 L28 19.5 L16.2 25 L4.4 19.5 Z"/></svg>
<span class="t" style="left:111.70px;top:820.2px;height:32px;line-height:32px;font-size:26px;transform:scaleX(0.9041);">Quest</span>
<span class="t" style="left:189.34px;top:820.2px;height:32px;line-height:32px;font-size:26px;transform:scaleX(0.8976);">-</span>
<span class="t" style="left:205.03px;top:820.2px;height:32px;line-height:32px;font-size:26px;transform:scaleX(0.8962);">Orc</span>
<span class="t" style="left:256.13px;top:820.2px;height:32px;line-height:32px;font-size:26px;transform:scaleX(0.9083);">Attacks</span>
<div style="position:absolute;left:12.8px;top:856.1px;width:43px;height:27px;background:#343434;"></div><svg style="position:absolute;left:24.700000000000006px;top:860.0px;" width="19.4" height="19.2" viewBox="0 0 19.4 19.2"><path fill="#fff" d="M0 0 L19.4 0 L9.7 19.2 Z"/></svg>
<svg style="position:absolute;left:72.8px;top:856.2px;" width="33.4" height="26" viewBox="-0.5 -0.5 33.4 26"><path fill="#fff" stroke="#383838" stroke-width="0.9" stroke-linejoin="round" d="M16 -0.4 L26.6 5.2 L16.3 10.8 L5.9 5.2 Z"/><path fill="#fff" stroke="#383838" stroke-width="0.9" stroke-linejoin="round" d="M5.6 5.8 L15.8 11.4 L10.4 16.8 L0.2 10.6 Q-0.6 10 0.2 9.4 Z"/><path fill="#fff" stroke="#383838" stroke-width="0.9" stroke-linejoin="round" d="M26.8 5.8 L32 9.4 Q32.8 10 32 10.6 L22 16.8 L16.6 11.4 Z"/><path fill="#fff" stroke="#383838" stroke-width="0.9" stroke-linejoin="round" d="M4.4 14.2 L10.7 18 L16.2 12.5 L21.7 18 L28 14.2 L28 19.5 L16.2 25 L4.4 19.5 Z"/></svg>
<span class="t" style="left:111.69px;top:852.2px;height:32px;line-height:32px;font-size:26px;transform:scaleX(0.9147);">Mechanic</span>
<span class="t" style="left:237.04px;top:852.2px;height:32px;line-height:32px;font-size:26px;transform:scaleX(0.9048);">-</span>
<span class="t" style="left:252.86px;top:852.2px;height:32px;line-height:32px;font-size:26px;transform:scaleX(0.9165);">Limited</span>
<span class="t" style="left:353.33px;top:852.2px;height:32px;line-height:32px;font-size:26px;transform:scaleX(0.9248);">start</span>
<span class="t" style="left:418.69px;top:852.2px;height:32px;line-height:32px;font-size:26px;transform:scaleX(0.9248);">area</span>
<svg style="position:absolute;left:125.2px;top:885.9px;" width="16.5" height="27.5" viewBox="0 0 16.5 27.5"><path fill="url(#golds)" d="M4.9 0.4 L12.1 0 L10.6 9.5 L16.3 9.5 L2.7 27.3 L5.7 14.4 L0 14 Z"/></svg>
<span class="t" style="left:154.86px;top:884.2px;height:32px;line-height:32px;font-size:26px;transform:scaleX(0.9431);">Leaving</span>
<span class="t" style="left:261.55px;top:884.2px;height:32px;line-height:32px;font-size:26px;transform:scaleX(0.9363);">Area</span>
<span class="t" style="left:327.79px;top:884.2px;height:32px;line-height:32px;font-size:26px;transform:scaleX(0.9396);">Warning</span>
<svg style="position:absolute;left:125.2px;top:917.9px;" width="16.5" height="27.5" viewBox="0 0 16.5 27.5"><path fill="url(#golds)" d="M4.9 0.4 L12.1 0 L10.6 9.5 L16.3 9.5 L2.7 27.3 L5.7 14.4 L0 14 Z"/></svg>
<span class="t" style="left:154.90px;top:916.2px;height:32px;line-height:32px;font-size:26px;transform:scaleX(0.9046);">Destroy</span>
<span class="t" style="left:255.66px;top:916.2px;height:32px;line-height:32px;font-size:26px;transform:scaleX(0.9068);">Intro</span>
<span class="t" style="left:322.88px;top:916.2px;height:32px;line-height:32px;font-size:26px;transform:scaleX(0.9082);">Boundaries</span>
<div style="position:absolute;left:12.8px;top:952.1px;width:43px;height:27px;background:#343434;"></div><svg style="position:absolute;left:24.700000000000006px;top:956.0px;" width="19.4" height="19.2" viewBox="0 0 19.4 19.2"><path fill="#fff" d="M0 0 L19.4 0 L9.7 19.2 Z"/></svg>
<svg style="position:absolute;left:72.8px;top:952.2px;" width="33.4" height="26" viewBox="-0.5 -0.5 33.4 26"><path fill="#fff" stroke="#383838" stroke-width="0.9" stroke-linejoin="round" d="M16 -0.4 L26.6 5.2 L16.3 10.8 L5.9 5.2 Z"/><path fill="#fff" stroke="#383838" stroke-width="0.9" stroke-linejoin="round" d="M5.6 5.8 L15.8 11.4 L10.4 16.8 L0.2 10.6 Q-0.6 10 0.2 9.4 Z"/><path fill="#fff" stroke="#383838" stroke-width="0.9" stroke-linejoin="round" d="M26.8 5.8 L32 9.4 Q32.8 10 32 10.6 L22 16.8 L16.6 11.4 Z"/><path fill="#fff" stroke="#383838" stroke-width="0.9" stroke-linejoin="round" d="M4.4 14.2 L10.7 18 L16.2 12.5 L21.7 18 L28 14.2 L28 19.5 L16.2 25 L4.4 19.5 Z"/></svg>
<span class="t" style="left:111.68px;top:948.2px;height:32px;line-height:32px;font-size:26px;transform:scaleX(0.9229);">Quests</span>
<span class="t" style="left:203.22px;top:948.2px;height:32px;line-height:32px;font-size:26px;transform:scaleX(0.9142);">-</span>
<span class="t" style="left:219.21px;top:948.2px;height:32px;line-height:32px;font-size:26px;transform:scaleX(0.9150);">Main</span>
<div style="position:absolute;left:55.8px;top:984.1px;width:43px;height:27px;background:#343434;"></div><svg style="position:absolute;left:67.7px;top:988.0px;" width="19.4" height="19.2" viewBox="0 0 19.4 19.2"><path fill="#fff" d="M0 0 L19.4 0 L9.7 19.2 Z"/></svg>
<svg style="position:absolute;left:115.8px;top:984.2px;" width="33.4" height="26" viewBox="-0.5 -0.5 33.4 26"><path fill="#fff" stroke="#383838" stroke-width="0.9" stroke-linejoin="round" d="M16 -0.4 L26.6 5.2 L16.3 10.8 L5.9 5.2 Z"/><path fill="#fff" stroke="#383838" stroke-width="0.9" stroke-linejoin="round" d="M5.6 5.8 L15.8 11.4 L10.4 16.8 L0.2 10.6 Q-0.6 10 0.2 9.4 Z"/><path fill="#fff" stroke="#383838" stroke-width="0.9" stroke-linejoin="round" d="M26.8 5.8 L32 9.4 Q32.8 10 32 10.6 L22 16.8 L16.6 11.4 Z"/><path fill="#fff" stroke="#383838" stroke-width="0.9" stroke-linejoin="round" d="M4.4 14.2 L10.7 18 L16.2 12.5 L21.7 18 L28 14.2 L28 19.5 L16.2 25 L4.4 19.5 Z"/></svg>
<span class="t" style="left:154.67px;top:980.2px;height:32px;line-height:32px;font-size:26px;transform:scaleX(0.9282);">Quest</span>
<span class="t" style="left:234.38px;top:980.2px;height:32px;line-height:32px;font-size:26px;transform:scaleX(0.9215);">-</span>
<span class="t" style="left:250.49px;top:980.2px;height:32px;line-height:32px;font-size:26px;transform:scaleX(0.9337);">Tactical</span>
<span class="t" style="left:356.12px;top:980.2px;height:32px;line-height:32px;font-size:26px;transform:scaleX(0.9345);">Assembly</span>
<svg style="position:absolute;left:168.2px;top:1013.9px;" width="16.5" height="27.5" viewBox="0 0 16.5 27.5"><path fill="url(#golds)" d="M4.9 0.4 L12.1 0 L10.6 9.5 L16.3 9.5 L2.7 27.3 L5.7 14.4 L0 14 Z"/></svg>
<span class="t" style="left:197.92px;top:1012.2px;height:32px;line-height:32px;font-size:26px;transform:scaleX(0.8752);">Quest</span>
<span class="t" style="left:273.08px;top:1012.2px;height:32px;line-height:32px;font-size:26px;transform:scaleX(0.8756);">Start</span>
<svg style="position:absolute;left:168.2px;top:1045.9px;" width="16.5" height="27.5" viewBox="0 0 16.5 27.5"><path fill="url(#golds)" d="M4.9 0.4 L12.1 0 L10.6 9.5 L16.3 9.5 L2.7 27.3 L5.7 14.4 L0 14 Z"/></svg>
<span class="t" style="left:198.80px;top:1044.2px;height:32px;line-height:32px;font-size:26px;transform:scaleX(0.9311);">Talking</span>
<span class="t" style="left:298.62px;top:1044.2px;height:32px;line-height:32px;font-size:26px;transform:scaleX(0.9398);">to</span>
<span class="t" style="left:331.14px;top:1044.2px;height:32px;line-height:32px;font-size:26px;transform:scaleX(0.9302);">Captain</span>
<div style="position:absolute;left:55.8px;top:1080.1px;width:43px;height:27px;background:#343434;"></div><svg style="position:absolute;left:67.80000000000001px;top:1084.1999999999998px;" width="19.2" height="18.8" viewBox="0 0 19.2 18.8"><path fill="#fff" d="M0 0 L19.2 9.4 L0 18.8 Z"/></svg>
<svg style="position:absolute;left:115.8px;top:1080.2px;" width="33.4" height="26" viewBox="-0.5 -0.5 33.4 26"><path fill="#fff" stroke="#383838" stroke-width="0.9" stroke-linejoin="round" d="M16 -0.4 L26.6 5.2 L16.3 10.8 L5.9 5.2 Z"/><path fill="#fff" stroke="#383838" stroke-width="0.9" stroke-linejoin="round" d="M5.6 5.8 L15.8 11.4 L10.4 16.8 L0.2 10.6 Q-0.6 10 0.2 9.4 Z"/><path fill="#fff" stroke="#383838" stroke-width="0.9" stroke-linejoin="round" d="M26.8 5.8 L32 9.4 Q32.8 10 32 10.6 L22 16.8 L16.6 11.4 Z"/><path fill="#fff" stroke="#383838" stroke-width="0.9" stroke-linejoin="round" d="M4.4 14.2 L10.7 18 L16.2 12.5 L21.7 18 L28 14.2 L28 19.5 L16.2 25 L4.4 19.5 Z"/></svg>
<span class="t" style="left:154.70px;top:1076.2px;height:32px;line-height:32px;font-size:26px;transform:scaleX(0.8994);">Quest</span>
<span class="t" style="left:231.93px;top:1076.2px;height:32px;line-height:32px;font-size:26px;transform:scaleX(0.8928);">-</span>
<span class="t" style="left:247.54px;top:1076.2px;height:32px;line-height:32px;font-size:26px;transform:scaleX(0.9054);">Securing</span>
<span class="t" style="left:362.72px;top:1076.2px;height:32px;line-height:32px;font-size:26px;transform:scaleX(0.9126);">the</span>
<span class="t" style="left:409.34px;top:1076.2px;height:32px;line-height:32px;font-size:26px;transform:scaleX(0.9062);">Perimeter</span>
<div style="position:absolute;left:55.8px;top:1112.1px;width:43px;height:27px;background:#343434;"></div><svg style="position:absolute;left:67.80000000000001px;top:1116.1999999999998px;" width="19.2" height="18.8" viewBox="0 0 19.2 18.8"><path fill="#fff" d="M0 0 L19.2 9.4 L0 18.8 Z"/></svg>
<svg style="position:absolute;left:115.8px;top:1112.2px;" width="33.4" height="26" viewBox="-0.5 -0.5 33.4 26"><path fill="#fff" stroke="#383838" stroke-width="0.9" stroke-linejoin="round" d="M16 -0.4 L26.6 5.2 L16.3 10.8 L5.9 5.2 Z"/><path fill="#fff" stroke="#383838" stroke-width="0.9" stroke-linejoin="round" d="M5.6 5.8 L15.8 11.4 L10.4 16.8 L0.2 10.6 Q-0.6 10 0.2 9.4 Z"/><path fill="#fff" stroke="#383838" stroke-width="0.9" stroke-linejoin="round" d="M26.8 5.8 L32 9.4 Q32.8 10 32 10.6 L22 16.8 L16.6 11.4 Z"/><path fill="#fff" stroke="#383838" stroke-width="0.9" stroke-linejoin="round" d="M4.4 14.2 L10.7 18 L16.2 12.5 L21.7 18 L28 14.2 L28 19.5 L16.2 25 L4.4 19.5 Z"/></svg>
<span class="t" style="left:154.69px;top:1108.2px;height:32px;line-height:32px;font-size:26px;transform:scaleX(0.9086);">Quest</span>
<span class="t" style="left:232.71px;top:1108.2px;height:32px;line-height:32px;font-size:26px;transform:scaleX(0.9020);">-</span>
<span class="t" style="left:248.48px;top:1108.2px;height:32px;line-height:32px;font-size:26px;transform:scaleX(0.9115);">Holding</span>
<span class="t" style="left:352.02px;top:1108.2px;height:32px;line-height:32px;font-size:26px;transform:scaleX(0.9219);">the</span>
<span class="t" style="left:399.12px;top:1108.2px;height:32px;line-height:32px;font-size:26px;transform:scaleX(0.9074);">Line</span>
<div style="position:absolute;left:12.8px;top:1144.1px;width:43px;height:27px;background:#343434;"></div><svg style="position:absolute;left:24.700000000000006px;top:1148.0px;" width="19.4" height="19.2" viewBox="0 0 19.4 19.2"><path fill="#fff" d="M0 0 L19.4 0 L9.7 19.2 Z"/></svg>
<svg style="position:absolute;left:72.8px;top:1144.2px;" width="33.4" height="26" viewBox="-0.5 -0.5 33.4 26"><path fill="#fff" stroke="#383838" stroke-width="0.9" stroke-linejoin="round" d="M16 -0.4 L26.6 5.2 L16.3 10.8 L5.9 5.2 Z"/><path fill="#fff" stroke="#383838" stroke-width="0.9" stroke-linejoin="round" d="M5.6 5.8 L15.8 11.4 L10.4 16.8 L0.2 10.6 Q-0.6 10 0.2 9.4 Z"/><path fill="#fff" stroke="#383838" stroke-width="0.9" stroke-linejoin="round" d="M26.8 5.8 L32 9.4 Q32.8 10 32 10.6 L22 16.8 L16.6 11.4 Z"/><path fill="#fff" stroke="#383838" stroke-width="0.9" stroke-linejoin="round" d="M4.4 14.2 L10.7 18 L16.2 12.5 L21.7 18 L28 14.2 L28 19.5 L16.2 25 L4.4 19.5 Z"/></svg>
<span class="t" style="left:111.70px;top:1140.2px;height:32px;line-height:32px;font-size:26px;transform:scaleX(0.8956);">Quests</span>
<span class="t" style="left:200.55px;top:1140.2px;height:32px;line-height:32px;font-size:26px;transform:scaleX(0.8872);">-</span>
<span class="t" style="left:216.06px;top:1140.2px;height:32px;line-height:32px;font-size:26px;transform:scaleX(0.8975);">Builder</span>
<span class="t" style="left:310.78px;top:1140.2px;height:32px;line-height:32px;font-size:26px;transform:scaleX(0.8956);">Quests</span>
<div style="position:absolute;left:55.8px;top:1176.1px;width:43px;height:27px;background:#343434;"></div><svg style="position:absolute;left:67.7px;top:1180.0px;" width="19.4" height="19.2" viewBox="0 0 19.4 19.2"><path fill="#fff" d="M0 0 L19.4 0 L9.7 19.2 Z"/></svg>
<svg style="position:absolute;left:115.8px;top:1176.2px;" width="33.4" height="26" viewBox="-0.5 -0.5 33.4 26"><path fill="#fff" stroke="#383838" stroke-width="0.9" stroke-linejoin="round" d="M16 -0.4 L26.6 5.2 L16.3 10.8 L5.9 5.2 Z"/><path fill="#fff" stroke="#383838" stroke-width="0.9" stroke-linejoin="round" d="M5.6 5.8 L15.8 11.4 L10.4 16.8 L0.2 10.6 Q-0.6 10 0.2 9.4 Z"/><path fill="#fff" stroke="#383838" stroke-width="0.9" stroke-linejoin="round" d="M26.8 5.8 L32 9.4 Q32.8 10 32 10.6 L22 16.8 L16.6 11.4 Z"/><path fill="#fff" stroke="#383838" stroke-width="0.9" stroke-linejoin="round" d="M4.4 14.2 L10.7 18 L16.2 12.5 L21.7 18 L28 14.2 L28 19.5 L16.2 25 L4.4 19.5 Z"/></svg>
<span class="t" style="left:154.70px;top:1172.2px;height:32px;line-height:32px;font-size:26px;transform:scaleX(0.9029);">Quest</span>
<span class="t" style="left:232.23px;top:1172.2px;height:32px;line-height:32px;font-size:26px;transform:scaleX(0.8964);">-</span>
<span class="t" style="left:247.90px;top:1172.2px;height:32px;line-height:32px;font-size:26px;transform:scaleX(0.8993);">The</span>
<span class="t" style="left:300.19px;top:1172.2px;height:32px;line-height:32px;font-size:26px;transform:scaleX(0.9022);">Keep</span>
<svg style="position:absolute;left:168.2px;top:1205.9px;" width="16.5" height="27.5" viewBox="0 0 16.5 27.5"><path fill="url(#golds)" d="M4.9 0.4 L12.1 0 L10.6 9.5 L16.3 9.5 L2.7 27.3 L5.7 14.4 L0 14 Z"/></svg>
<span class="t" style="left:197.92px;top:1204.2px;height:32px;line-height:32px;font-size:26px;transform:scaleX(0.8817);">Quest</span>
<span class="t" style="left:273.63px;top:1204.2px;height:32px;line-height:32px;font-size:26px;transform:scaleX(0.8838);">Setup</span>
<div style="position:absolute;left:4px;top:1236.2px;width:955px;height:31.6px;background:#7f7f7f;"></div>
<svg style="position:absolute;left:168.2px;top:1237.9px;" width="16.5" height="27.5" viewBox="0 0 16.5 27.5"><path fill="url(#golds)" d="M4.9 0.4 L12.1 0 L10.6 9.5 L16.3 9.5 L2.7 27.3 L5.7 14.4 L0 14 Z"/></svg>
<span class="t" style="left:198.80px;top:1236.2px;height:32px;line-height:32px;font-size:26px;transform:scaleX(0.9077);">Take</span>
<span class="t" style="left:264.71px;top:1236.2px;height:32px;line-height:32px;font-size:26px;transform:scaleX(0.9208);">quest</span>
<span class="t" style="left:339.37px;top:1236.2px;height:32px;line-height:32px;font-size:26px;transform:scaleX(0.9208);">from</span>
<span class="t" style="left:404.62px;top:1236.2px;height:32px;line-height:32px;font-size:26px;transform:scaleX(0.9208);">captain</span>
<svg style="position:absolute;left:168.2px;top:1269.9px;" width="16.5" height="27.5" viewBox="0 0 16.5 27.5"><path fill="url(#golds)" d="M4.9 0.4 L12.1 0 L10.6 9.5 L16.3 9.5 L2.7 27.3 L5.7 14.4 L0 14 Z"/></svg>
<span class="t" style="left:197.91px;top:1268.2px;height:32px;line-height:32px;font-size:26px;transform:scaleX(0.8935);">Make</span>
<span class="t" style="left:271.12px;top:1268.2px;height:32px;line-height:32px;font-size:26px;transform:scaleX(0.9015);">Builder</span>
<span class="t" style="left:366.26px;top:1268.2px;height:32px;line-height:32px;font-size:26px;transform:scaleX(0.9079);">Interactable</span>
<svg style="position:absolute;left:168.2px;top:1301.9px;" width="16.5" height="27.5" viewBox="0 0 16.5 27.5"><path fill="url(#golds)" d="M4.9 0.4 L12.1 0 L10.6 9.5 L16.3 9.5 L2.7 27.3 L5.7 14.4 L0 14 Z"/></svg>
<span class="t" style="left:198.80px;top:1300.2px;height:32px;line-height:32px;font-size:26px;transform:scaleX(0.8986);">Workers</span>
<span class="t" style="left:306.94px;top:1300.2px;height:32px;line-height:32px;font-size:26px;transform:scaleX(0.9101);">at</span>
<span class="t" style="left:338.30px;top:1300.2px;height:32px;line-height:32px;font-size:26px;transform:scaleX(0.9101);">base</span>
<div style="position:absolute;left:12.8px;top:1336.1px;width:43px;height:27px;background:#343434;"></div><svg style="position:absolute;left:24.800000000000004px;top:1340.1999999999998px;" width="19.2" height="18.8" viewBox="0 0 19.2 18.8"><path fill="#fff" d="M0 0 L19.2 9.4 L0 18.8 Z"/></svg>
<svg style="position:absolute;left:72.8px;top:1336.2px;" width="33.4" height="26" viewBox="-0.5 -0.5 33.4 26"><path fill="#fff" stroke="#383838" stroke-width="0.9" stroke-linejoin="round" d="M16 -0.4 L26.6 5.2 L16.3 10.8 L5.9 5.2 Z"/><path fill="#fff" stroke="#383838" stroke-width="0.9" stroke-linejoin="round" d="M5.6 5.8 L15.8 11.4 L10.4 16.8 L0.2 10.6 Q-0.6 10 0.2 9.4 Z"/><path fill="#fff" stroke="#383838" stroke-width="0.9" stroke-linejoin="round" d="M26.8 5.8 L32 9.4 Q32.8 10 32 10.6 L22 16.8 L16.6 11.4 Z"/><path fill="#fff" stroke="#383838" stroke-width="0.9" stroke-linejoin="round" d="M4.4 14.2 L10.7 18 L16.2 12.5 L21.7 18 L28 14.2 L28 19.5 L16.2 25 L4.4 19.5 Z"/></svg>
<span class="t" style="left:111.69px;top:1332.2px;height:32px;line-height:32px;font-size:26px;transform:scaleX(0.9055);">Quests</span>
<span class="t" style="left:201.51px;top:1332.2px;height:32px;line-height:32px;font-size:26px;transform:scaleX(0.8970);">-</span>
<span class="t" style="left:217.19px;top:1332.2px;height:32px;line-height:32px;font-size:26px;transform:scaleX(0.9079);">Thorne</span>
<span class="t" style="left:310.62px;top:1332.2px;height:32px;line-height:32px;font-size:26px;transform:scaleX(0.9020);">Side</span>
<span class="t" style="left:370.88px;top:1332.2px;height:32px;line-height:32px;font-size:26px;transform:scaleX(0.9055);">Quests</span>
<div style="position:absolute;left:12.8px;top:1368.1px;width:43px;height:27px;background:#343434;"></div><svg style="position:absolute;left:24.800000000000004px;top:1372.1999999999998px;" width="19.2" height="18.8" viewBox="0 0 19.2 18.8"><path fill="#fff" d="M0 0 L19.2 9.4 L0 18.8 Z"/></svg>
<svg style="position:absolute;left:72.8px;top:1368.2px;" width="33.4" height="26" viewBox="-0.5 -0.5 33.4 26"><path fill="#fff" stroke="#383838" stroke-width="0.9" stroke-linejoin="round" d="M16 -0.4 L26.6 5.2 L16.3 10.8 L5.9 5.2 Z"/><path fill="#fff" stroke="#383838" stroke-width="0.9" stroke-linejoin="round" d="M5.6 5.8 L15.8 11.4 L10.4 16.8 L0.2 10.6 Q-0.6 10 0.2 9.4 Z"/><path fill="#fff" stroke="#383838" stroke-width="0.9" stroke-linejoin="round" d="M26.8 5.8 L32 9.4 Q32.8 10 32 10.6 L22 16.8 L16.6 11.4 Z"/><path fill="#fff" stroke="#383838" stroke-width="0.9" stroke-linejoin="round" d="M4.4 14.2 L10.7 18 L16.2 12.5 L21.7 18 L28 14.2 L28 19.5 L16.2 25 L4.4 19.5 Z"/></svg>
<span class="t" style="left:111.70px;top:1364.2px;height:32px;line-height:32px;font-size:26px;transform:scaleX(0.8982);">Quests</span>
<span class="t" style="left:200.80px;top:1364.2px;height:32px;line-height:32px;font-size:26px;transform:scaleX(0.8898);">-</span>
<span class="t" style="left:216.36px;top:1364.2px;height:32px;line-height:32px;font-size:26px;transform:scaleX(0.8934);">World</span>
<span class="t" style="left:295.36px;top:1364.2px;height:32px;line-height:32px;font-size:26px;transform:scaleX(0.8948);">Side</span>
<span class="t" style="left:355.14px;top:1364.2px;height:32px;line-height:32px;font-size:26px;transform:scaleX(0.8982);">Quests</span>
<div style="position:absolute;left:12.8px;top:1400.1px;width:43px;height:27px;background:#343434;"></div><svg style="position:absolute;left:24.800000000000004px;top:1404.1999999999998px;" width="19.2" height="18.8" viewBox="0 0 19.2 18.8"><path fill="#fff" d="M0 0 L19.2 9.4 L0 18.8 Z"/></svg>
<svg style="position:absolute;left:72.8px;top:1400.2px;" width="33.4" height="26" viewBox="-0.5 -0.5 33.4 26"><path fill="#fff" stroke="#383838" stroke-width="0.9" stroke-linejoin="round" d="M16 -0.4 L26.6 5.2 L16.3 10.8 L5.9 5.2 Z"/><path fill="#fff" stroke="#383838" stroke-width="0.9" stroke-linejoin="round" d="M5.6 5.8 L15.8 11.4 L10.4 16.8 L0.2 10.6 Q-0.6 10 0.2 9.4 Z"/><path fill="#fff" stroke="#383838" stroke-width="0.9" stroke-linejoin="round" d="M26.8 5.8 L32 9.4 Q32.8 10 32 10.6 L22 16.8 L16.6 11.4 Z"/><path fill="#fff" stroke="#383838" stroke-width="0.9" stroke-linejoin="round" d="M4.4 14.2 L10.7 18 L16.2 12.5 L21.7 18 L28 14.2 L28 19.5 L16.2 25 L4.4 19.5 Z"/></svg>
<span class="t" style="left:112.60px;top:1396.2px;height:32px;line-height:32px;font-size:26px;transform:scaleX(0.9367);">Tutorials</span>
<div style="position:absolute;left:972.3px;top:171.3px;width:42.4px;height:42.4px;box-sizing:border-box;background:#2a2a2a;border:2px solid #858585;border-radius:5px;overflow:hidden"><svg width="38" height="38" viewBox="0 0 38 38" style="position:absolute;left:0;top:0"><path d="M8.3 20.5 L15.5 27 L29.5 12" fill="none" stroke="#fff" stroke-width="5" stroke-linecap="round" stroke-linejoin="round"/></svg></div>
<div style="position:absolute;left:1055px;top:171px;width:412px;height:43px;box-sizing:border-box;background:#282828;border:2px solid #202020;border-radius:6px;overflow:hidden"></div>
<span class="t" style="left:1066.00px;top:171.0px;height:43px;line-height:43px;font-size:26px;transform:scaleX(1.0806);font-family:'Liberation Sans','DejaVu Sans',sans-serif;-webkit-text-stroke-width:0;">Take quest from captain</span>
<div style="position:absolute;left:1523.4px;top:165px;width:53.6px;height:53.6px;box-sizing:border-box;background:#5b5b5b;border:2px solid #4b4b4b;border-radius:5px;overflow:hidden"></div>
<div style="position:absolute;left:1523.4px;top:166.2px;width:53.6px;height:53.6px;text-align:center;line-height:53.6px;font-family:'Liberation Sans','DejaVu Sans',sans-serif;font-weight:bold;font-size:53.5px;color:#d8b857;transform:scaleX(1.08)">L</div>
<div style="position:absolute;left:1589.4px;top:165px;width:53.6px;height:53.6px;box-sizing:border-box;background:#5b5b5b;border:2px solid #4b4b4b;border-radius:5px;overflow:hidden"></div>
<div style="position:absolute;left:1589.4px;top:166.2px;width:53.6px;height:53.6px;text-align:center;line-height:53.6px;font-family:'Liberation Sans','DejaVu Sans',sans-serif;font-weight:bold;font-size:53.5px;color:#d8b857;transform:scaleX(0.935)">B</div>
<div style="position:absolute;left:1655.4px;top:165px;width:53.6px;height:53.6px;box-sizing:border-box;background:#5b5b5b;border:2px solid #4b4b4b;border-radius:5px;overflow:hidden"></div>
<div style="position:absolute;left:1655.4px;top:166.2px;width:53.6px;height:53.6px;text-align:center;line-height:53.6px;font-family:'Liberation Sans','DejaVu Sans',sans-serif;font-weight:bold;font-size:53.5px;color:#d8b857;transform:scaleX(0.946)">G</div>
<div style="position:absolute;left:1791px;top:171px;width:119px;height:42.6px;box-sizing:border-box;background:#4d4d4d;border:2px solid #1e1e1e;border-radius:5px;overflow:hidden"></div>
<span class="t" style="left:1800.50px;top:171.0px;height:42.6px;line-height:42.6px;font-size:26px;transform:scaleX(1.0000);font-family:'Liberation Sans','DejaVu Sans',sans-serif;-webkit-text-stroke-width:0;">All</span>
<svg style="position:absolute;left:1890.8px;top:186.8px;" width="11.6" height="11.6" viewBox="0 0 11.6 11.6"><path fill="#fff" d="M0 0 L11.6 0 L5.8 11.6 Z"/></svg>
<span class="t" style="left:1929.07px;top:171.7px;height:43px;line-height:43px;font-size:26px;transform:scaleX(0.9310);">conditions</span>
<span class="t" style="left:2064.00px;top:171.7px;height:43px;line-height:43px;font-size:26px;transform:scaleX(0.9310);">must</span>
<span class="t" style="left:2132.62px;top:171.7px;height:43px;line-height:43px;font-size:26px;transform:scaleX(0.9310);">be</span>
<span class="t" style="left:2170.36px;top:171.7px;height:43px;line-height:43px;font-size:26px;transform:scaleX(0.9310);">met</span>
<svg style="position:absolute;left:1036.8px;top:233.2px;" width="27.3" height="27" viewBox="0 0 27.3 27"><rect x="0" y="0" width="27.3" height="27" rx="3" fill="#fff"/><circle cx="6.5" cy="7.2" r="1.75" fill="#383838"/><rect x="11.2" y="6.3" width="11.4" height="1.8" rx="0.5" fill="#383838"/><circle cx="6.5" cy="13.4" r="1.75" fill="#383838"/><rect x="11.2" y="12.5" width="11.4" height="1.8" rx="0.5" fill="#383838"/><circle cx="6.5" cy="19.7" r="1.75" fill="#383838"/><rect x="11.2" y="18.8" width="11.4" height="1.8" rx="0.5" fill="#383838"/></svg>
<div style="position:absolute;left:974.6px;top:268.2px;width:43px;height:26.5px;background:#353535;"></div><svg style="position:absolute;left:986.5px;top:272.09999999999997px;" width="19.4" height="19.2" viewBox="0 0 19.4 19.2"><path fill="#fff" d="M0 0 L19.4 0 L9.7 19.2 Z"/></svg>
<svg style="position:absolute;left:1036.8px;top:265.2px;" width="27.3" height="27" viewBox="0 0 27.3 27"><rect x="0" y="0" width="27.3" height="27" rx="3" fill="#fff"/><circle cx="6.5" cy="7.2" r="1.75" fill="#383838"/><rect x="11.2" y="6.3" width="11.4" height="1.8" rx="0.5" fill="#383838"/><circle cx="6.5" cy="13.4" r="1.75" fill="#383838"/><rect x="11.2" y="12.5" width="11.4" height="1.8" rx="0.5" fill="#383838"/><circle cx="6.5" cy="19.7" r="1.75" fill="#383838"/><rect x="11.2" y="18.8" width="11.4" height="1.8" rx="0.5" fill="#383838"/></svg>
<svg style="position:absolute;left:1079.8px;top:297.2px;" width="27.3" height="27" viewBox="0 0 27.3 27"><rect x="0" y="0" width="27.3" height="27" rx="3" fill="#fff"/><circle cx="6.5" cy="7.2" r="1.75" fill="#383838"/><rect x="11.2" y="6.3" width="11.4" height="1.8" rx="0.5" fill="#383838"/><circle cx="6.5" cy="13.4" r="1.75" fill="#383838"/><rect x="11.2" y="12.5" width="11.4" height="1.8" rx="0.5" fill="#383838"/><circle cx="6.5" cy="19.7" r="1.75" fill="#383838"/><rect x="11.2" y="18.8" width="11.4" height="1.8" rx="0.5" fill="#383838"/></svg>
<div style="position:absolute;left:974.6px;top:332.2px;width:43px;height:26.5px;background:#353535;"></div><svg style="position:absolute;left:986.5px;top:336.09999999999997px;" width="19.4" height="19.2" viewBox="0 0 19.4 19.2"><path fill="#fff" d="M0 0 L19.4 0 L9.7 19.2 Z"/></svg>
<svg style="position:absolute;left:1036.8px;top:329.2px;" width="27.3" height="27" viewBox="0 0 27.3 27"><rect x="0" y="0" width="27.3" height="27" rx="3" fill="#fff"/><circle cx="6.5" cy="7.2" r="1.75" fill="#383838"/><rect x="11.2" y="6.3" width="11.4" height="1.8" rx="0.5" fill="#383838"/><circle cx="6.5" cy="13.4" r="1.75" fill="#383838"/><rect x="11.2" y="12.5" width="11.4" height="1.8" rx="0.5" fill="#383838"/><circle cx="6.5" cy="19.7" r="1.75" fill="#383838"/><rect x="11.2" y="18.8" width="11.4" height="1.8" rx="0.5" fill="#383838"/></svg>
<svg style="position:absolute;left:1079.8px;top:361.2px;" width="27.3" height="27" viewBox="0 0 27.3 27"><rect x="0" y="0" width="27.3" height="27" rx="3" fill="#fff"/><circle cx="6.5" cy="7.2" r="1.75" fill="#383838"/><rect x="11.2" y="6.3" width="11.4" height="1.8" rx="0.5" fill="#383838"/><circle cx="6.5" cy="13.4" r="1.75" fill="#383838"/><rect x="11.2" y="12.5" width="11.4" height="1.8" rx="0.5" fill="#383838"/><circle cx="6.5" cy="19.7" r="1.75" fill="#383838"/><rect x="11.2" y="18.8" width="11.4" height="1.8" rx="0.5" fill="#383838"/></svg>
<svg style="position:absolute;left:1079.8px;top:393.2px;" width="27.3" height="27" viewBox="0 0 27.3 27"><rect x="0" y="0" width="27.3" height="27" rx="3" fill="#fff"/><circle cx="6.5" cy="7.2" r="1.75" fill="#383838"/><rect x="11.2" y="6.3" width="11.4" height="1.8" rx="0.5" fill="#383838"/><circle cx="6.5" cy="13.4" r="1.75" fill="#383838"/><rect x="11.2" y="12.5" width="11.4" height="1.8" rx="0.5" fill="#383838"/><circle cx="6.5" cy="19.7" r="1.75" fill="#383838"/><rect x="11.2" y="18.8" width="11.4" height="1.8" rx="0.5" fill="#383838"/></svg>
<div style="position:absolute;left:965px;top:423px;width:2294px;height:32px;background:#3c6f9f;"></div>
<div style="position:absolute;left:974.6px;top:428.2px;width:43px;height:26.5px;background:#35669a;"></div><svg style="position:absolute;left:986.5px;top:432.09999999999997px;" width="19.4" height="19.2" viewBox="0 0 19.4 19.2"><path fill="#fff" d="M0 0 L19.4 0 L9.7 19.2 Z"/></svg>
<svg style="position:absolute;left:1036.8px;top:425.2px;" width="27.3" height="27" viewBox="0 0 27.3 27"><rect x="0" y="0" width="27.3" height="27" rx="3" fill="#fff"/><circle cx="6.5" cy="7.2" r="1.75" fill="#3b6fa0"/><rect x="11.2" y="6.3" width="11.4" height="1.8" rx="0.5" fill="#3b6fa0"/><circle cx="6.5" cy="13.4" r="1.75" fill="#3b6fa0"/><rect x="11.2" y="12.5" width="11.4" height="1.8" rx="0.5" fill="#3b6fa0"/><circle cx="6.5" cy="19.7" r="1.75" fill="#3b6fa0"/><rect x="11.2" y="18.8" width="11.4" height="1.8" rx="0.5" fill="#3b6fa0"/></svg>
<svg style="position:absolute;left:1079.8px;top:457.2px;" width="27.3" height="27" viewBox="0 0 27.3 27"><rect x="0" y="0" width="27.3" height="27" rx="3" fill="#fff"/><circle cx="6.5" cy="7.2" r="1.75" fill="#383838"/><rect x="11.2" y="6.3" width="11.4" height="1.8" rx="0.5" fill="#383838"/><circle cx="6.5" cy="13.4" r="1.75" fill="#383838"/><rect x="11.2" y="12.5" width="11.4" height="1.8" rx="0.5" fill="#383838"/><circle cx="6.5" cy="19.7" r="1.75" fill="#383838"/><rect x="11.2" y="18.8" width="11.4" height="1.8" rx="0.5" fill="#383838"/></svg>
<svg style="position:absolute;left:1079.8px;top:489.2px;" width="27.3" height="27" viewBox="0 0 27.3 27"><rect x="0" y="0" width="27.3" height="27" rx="3" fill="#fff"/><circle cx="6.5" cy="7.2" r="1.75" fill="#383838"/><rect x="11.2" y="6.3" width="11.4" height="1.8" rx="0.5" fill="#383838"/><circle cx="6.5" cy="13.4" r="1.75" fill="#383838"/><rect x="11.2" y="12.5" width="11.4" height="1.8" rx="0.5" fill="#383838"/><circle cx="6.5" cy="19.7" r="1.75" fill="#383838"/><rect x="11.2" y="18.8" width="11.4" height="1.8" rx="0.5" fill="#383838"/></svg>
<svg style="position:absolute;left:1079.8px;top:521.2px;" width="27.3" height="27" viewBox="0 0 27.3 27"><rect x="0" y="0" width="27.3" height="27" rx="3" fill="#fff"/><circle cx="6.5" cy="7.2" r="1.75" fill="#383838"/><rect x="11.2" y="6.3" width="11.4" height="1.8" rx="0.5" fill="#383838"/><circle cx="6.5" cy="13.4" r="1.75" fill="#383838"/><rect x="11.2" y="12.5" width="11.4" height="1.8" rx="0.5" fill="#383838"/><circle cx="6.5" cy="19.7" r="1.75" fill="#383838"/><rect x="11.2" y="18.8" width="11.4" height="1.8" rx="0.5" fill="#383838"/></svg>
<svg style="position:absolute;left:1079.8px;top:553.2px;" width="27.3" height="27" viewBox="0 0 27.3 27"><rect x="0" y="0" width="27.3" height="27" rx="3" fill="#fff"/><circle cx="6.5" cy="7.2" r="1.75" fill="#383838"/><rect x="11.2" y="6.3" width="11.4" height="1.8" rx="0.5" fill="#383838"/><circle cx="6.5" cy="13.4" r="1.75" fill="#383838"/><rect x="11.2" y="12.5" width="11.4" height="1.8" rx="0.5" fill="#383838"/><circle cx="6.5" cy="19.7" r="1.75" fill="#383838"/><rect x="11.2" y="18.8" width="11.4" height="1.8" rx="0.5" fill="#383838"/></svg>
<svg style="position:absolute;left:1079.8px;top:585.2px;" width="27.3" height="27" viewBox="0 0 27.3 27"><rect x="0" y="0" width="27.3" height="27" rx="3" fill="#fff"/><circle cx="6.5" cy="7.2" r="1.75" fill="#383838"/><rect x="11.2" y="6.3" width="11.4" height="1.8" rx="0.5" fill="#383838"/><circle cx="6.5" cy="13.4" r="1.75" fill="#383838"/><rect x="11.2" y="12.5" width="11.4" height="1.8" rx="0.5" fill="#383838"/><circle cx="6.5" cy="19.7" r="1.75" fill="#383838"/><rect x="11.2" y="18.8" width="11.4" height="1.8" rx="0.5" fill="#383838"/></svg>
<svg style="position:absolute;left:1079.8px;top:617.2px;" width="27.3" height="27" viewBox="0 0 27.3 27"><rect x="0" y="0" width="27.3" height="27" rx="3" fill="#fff"/><circle cx="6.5" cy="7.2" r="1.75" fill="#383838"/><rect x="11.2" y="6.3" width="11.4" height="1.8" rx="0.5" fill="#383838"/><circle cx="6.5" cy="13.4" r="1.75" fill="#383838"/><rect x="11.2" y="12.5" width="11.4" height="1.8" rx="0.5" fill="#383838"/><circle cx="6.5" cy="19.7" r="1.75" fill="#383838"/><rect x="11.2" y="18.8" width="11.4" height="1.8" rx="0.5" fill="#383838"/></svg>
<svg style="position:absolute;left:1079.8px;top:649.2px;" width="27.3" height="27" viewBox="0 0 27.3 27"><rect x="0" y="0" width="27.3" height="27" rx="3" fill="#fff"/><circle cx="6.5" cy="7.2" r="1.75" fill="#383838"/><rect x="11.2" y="6.3" width="11.4" height="1.8" rx="0.5" fill="#383838"/><circle cx="6.5" cy="13.4" r="1.75" fill="#383838"/><rect x="11.2" y="12.5" width="11.4" height="1.8" rx="0.5" fill="#383838"/><circle cx="6.5" cy="19.7" r="1.75" fill="#383838"/><rect x="11.2" y="18.8" width="11.4" height="1.8" rx="0.5" fill="#383838"/></svg>
<svg style="position:absolute;left:1079.8px;top:681.2px;" width="27.3" height="27" viewBox="0 0 27.3 27"><rect x="0" y="0" width="27.3" height="27" rx="3" fill="#fff"/><circle cx="6.5" cy="7.2" r="1.75" fill="#383838"/><rect x="11.2" y="6.3" width="11.4" height="1.8" rx="0.5" fill="#383838"/><circle cx="6.5" cy="13.4" r="1.75" fill="#383838"/><rect x="11.2" y="12.5" width="11.4" height="1.8" rx="0.5" fill="#383838"/><circle cx="6.5" cy="19.7" r="1.75" fill="#383838"/><rect x="11.2" y="18.8" width="11.4" height="1.8" rx="0.5" fill="#383838"/></svg>
<svg style="position:absolute;left:1079.8px;top:713.2px;" width="27.3" height="27" viewBox="0 0 27.3 27"><rect x="0" y="0" width="27.3" height="27" rx="3" fill="#fff"/><circle cx="6.5" cy="7.2" r="1.75" fill="#383838"/><rect x="11.2" y="6.3" width="11.4" height="1.8" rx="0.5" fill="#383838"/><circle cx="6.5" cy="13.4" r="1.75" fill="#383838"/><rect x="11.2" y="12.5" width="11.4" height="1.8" rx="0.5" fill="#383838"/><circle cx="6.5" cy="19.7" r="1.75" fill="#383838"/><rect x="11.2" y="18.8" width="11.4" height="1.8" rx="0.5" fill="#383838"/></svg>
<svg style="position:absolute;left:1079.8px;top:745.2px;" width="27.3" height="27" viewBox="0 0 27.3 27"><rect x="0" y="0" width="27.3" height="27" rx="3" fill="#fff"/><circle cx="6.5" cy="7.2" r="1.75" fill="#383838"/><rect x="11.2" y="6.3" width="11.4" height="1.8" rx="0.5" fill="#383838"/><circle cx="6.5" cy="13.4" r="1.75" fill="#383838"/><rect x="11.2" y="12.5" width="11.4" height="1.8" rx="0.5" fill="#383838"/><circle cx="6.5" cy="19.7" r="1.75" fill="#383838"/><rect x="11.2" y="18.8" width="11.4" height="1.8" rx="0.5" fill="#383838"/></svg>
<svg style="position:absolute;left:1079.8px;top:777.2px;" width="27.3" height="27" viewBox="0 0 27.3 27"><rect x="0" y="0" width="27.3" height="27" rx="3" fill="#fff"/><circle cx="6.5" cy="7.2" r="1.75" fill="#383838"/><rect x="11.2" y="6.3" width="11.4" height="1.8" rx="0.5" fill="#383838"/><circle cx="6.5" cy="13.4" r="1.75" fill="#383838"/><rect x="11.2" y="12.5" width="11.4" height="1.8" rx="0.5" fill="#383838"/><circle cx="6.5" cy="19.7" r="1.75" fill="#383838"/><rect x="11.2" y="18.8" width="11.4" height="1.8" rx="0.5" fill="#383838"/></svg>
<svg style="position:absolute;left:1079.8px;top:809.2px;" width="27.3" height="27" viewBox="0 0 27.3 27"><rect x="0" y="0" width="27.3" height="27" rx="3" fill="#fff"/><circle cx="6.5" cy="7.2" r="1.75" fill="#383838"/><rect x="11.2" y="6.3" width="11.4" height="1.8" rx="0.5" fill="#383838"/><circle cx="6.5" cy="13.4" r="1.75" fill="#383838"/><rect x="11.2" y="12.5" width="11.4" height="1.8" rx="0.5" fill="#383838"/><circle cx="6.5" cy="19.7" r="1.75" fill="#383838"/><rect x="11.2" y="18.8" width="11.4" height="1.8" rx="0.5" fill="#383838"/></svg>
<svg style="position:absolute;left:1079.8px;top:841.2px;" width="27.3" height="27" viewBox="0 0 27.3 27"><rect x="0" y="0" width="27.3" height="27" rx="3" fill="#fff"/><circle cx="6.5" cy="7.2" r="1.75" fill="#383838"/><rect x="11.2" y="6.3" width="11.4" height="1.8" rx="0.5" fill="#383838"/><circle cx="6.5" cy="13.4" r="1.75" fill="#383838"/><rect x="11.2" y="12.5" width="11.4" height="1.8" rx="0.5" fill="#383838"/><circle cx="6.5" cy="19.7" r="1.75" fill="#383838"/><rect x="11.2" y="18.8" width="11.4" height="1.8" rx="0.5" fill="#383838"/></svg>
<svg style="position:absolute;left:1079.8px;top:873.2px;" width="27.3" height="27" viewBox="0 0 27.3 27"><rect x="0" y="0" width="27.3" height="27" rx="3" fill="#fff"/><circle cx="6.5" cy="7.2" r="1.75" fill="#383838"/><rect x="11.2" y="6.3" width="11.4" height="1.8" rx="0.5" fill="#383838"/><circle cx="6.5" cy="13.4" r="1.75" fill="#383838"/><rect x="11.2" y="12.5" width="11.4" height="1.8" rx="0.5" fill="#383838"/><circle cx="6.5" cy="19.7" r="1.75" fill="#383838"/><rect x="11.2" y="18.8" width="11.4" height="1.8" rx="0.5" fill="#383838"/></svg>
<svg style="position:absolute;left:1079.8px;top:905.2px;" width="27.3" height="27" viewBox="0 0 27.3 27"><rect x="0" y="0" width="27.3" height="27" rx="3" fill="#fff"/><circle cx="6.5" cy="7.2" r="1.75" fill="#383838"/><rect x="11.2" y="6.3" width="11.4" height="1.8" rx="0.5" fill="#383838"/><circle cx="6.5" cy="13.4" r="1.75" fill="#383838"/><rect x="11.2" y="12.5" width="11.4" height="1.8" rx="0.5" fill="#383838"/><circle cx="6.5" cy="19.7" r="1.75" fill="#383838"/><rect x="11.2" y="18.8" width="11.4" height="1.8" rx="0.5" fill="#383838"/></svg>
<svg style="position:absolute;left:1079.8px;top:937.2px;" width="27.3" height="27" viewBox="0 0 27.3 27"><rect x="0" y="0" width="27.3" height="27" rx="3" fill="#fff"/><circle cx="6.5" cy="7.2" r="1.75" fill="#383838"/><rect x="11.2" y="6.3" width="11.4" height="1.8" rx="0.5" fill="#383838"/><circle cx="6.5" cy="13.4" r="1.75" fill="#383838"/><rect x="11.2" y="12.5" width="11.4" height="1.8" rx="0.5" fill="#383838"/><circle cx="6.5" cy="19.7" r="1.75" fill="#383838"/><rect x="11.2" y="18.8" width="11.4" height="1.8" rx="0.5" fill="#383838"/></svg>
<svg style="position:absolute;left:1079.8px;top:969.2px;" width="27.3" height="27" viewBox="0 0 27.3 27"><rect x="0" y="0" width="27.3" height="27" rx="3" fill="#fff"/><circle cx="6.5" cy="7.2" r="1.75" fill="#383838"/><rect x="11.2" y="6.3" width="11.4" height="1.8" rx="0.5" fill="#383838"/><circle cx="6.5" cy="13.4" r="1.75" fill="#383838"/><rect x="11.2" y="12.5" width="11.4" height="1.8" rx="0.5" fill="#383838"/><circle cx="6.5" cy="19.7" r="1.75" fill="#383838"/><rect x="11.2" y="18.8" width="11.4" height="1.8" rx="0.5" fill="#383838"/></svg>
<svg style="position:absolute;left:1079.8px;top:1001.2px;" width="27.3" height="27" viewBox="0 0 27.3 27"><rect x="0" y="0" width="27.3" height="27" rx="3" fill="#fff"/><circle cx="6.5" cy="7.2" r="1.75" fill="#383838"/><rect x="11.2" y="6.3" width="11.4" height="1.8" rx="0.5" fill="#383838"/><circle cx="6.5" cy="13.4" r="1.75" fill="#383838"/><rect x="11.2" y="12.5" width="11.4" height="1.8" rx="0.5" fill="#383838"/><circle cx="6.5" cy="19.7" r="1.75" fill="#383838"/><rect x="11.2" y="18.8" width="11.4" height="1.8" rx="0.5" fill="#383838"/></svg>
<svg style="position:absolute;left:1079.8px;top:1033.2px;" width="27.3" height="27" viewBox="0 0 27.3 27"><rect x="0" y="0" width="27.3" height="27" rx="3" fill="#fff"/><circle cx="6.5" cy="7.2" r="1.75" fill="#383838"/><rect x="11.2" y="6.3" width="11.4" height="1.8" rx="0.5" fill="#383838"/><circle cx="6.5" cy="13.4" r="1.75" fill="#383838"/><rect x="11.2" y="12.5" width="11.4" height="1.8" rx="0.5" fill="#383838"/><circle cx="6.5" cy="19.7" r="1.75" fill="#383838"/><rect x="11.2" y="18.8" width="11.4" height="1.8" rx="0.5" fill="#383838"/></svg>
<svg style="position:absolute;left:1079.8px;top:1065.2px;" width="27.3" height="27" viewBox="0 0 27.3 27"><rect x="0" y="0" width="27.3" height="27" rx="3" fill="#fff"/><circle cx="6.5" cy="7.2" r="1.75" fill="#383838"/><rect x="11.2" y="6.3" width="11.4" height="1.8" rx="0.5" fill="#383838"/><circle cx="6.5" cy="13.4" r="1.75" fill="#383838"/><rect x="11.2" y="12.5" width="11.4" height="1.8" rx="0.5" fill="#383838"/><circle cx="6.5" cy="19.7" r="1.75" fill="#383838"/><rect x="11.2" y="18.8" width="11.4" height="1.8" rx="0.5" fill="#383838"/></svg>
<svg style="position:absolute;left:1079.8px;top:1097.2px;" width="27.3" height="27" viewBox="0 0 27.3 27"><rect x="0" y="0" width="27.3" height="27" rx="3" fill="#fff"/><circle cx="6.5" cy="7.2" r="1.75" fill="#383838"/><rect x="11.2" y="6.3" width="11.4" height="1.8" rx="0.5" fill="#383838"/><circle cx="6.5" cy="13.4" r="1.75" fill="#383838"/><rect x="11.2" y="12.5" width="11.4" height="1.8" rx="0.5" fill="#383838"/><circle cx="6.5" cy="19.7" r="1.75" fill="#383838"/><rect x="11.2" y="18.8" width="11.4" height="1.8" rx="0.5" fill="#383838"/></svg>
<svg style="position:absolute;left:1079.8px;top:1129.2px;" width="27.3" height="27" viewBox="0 0 27.3 27"><rect x="0" y="0" width="27.3" height="27" rx="3" fill="#fff"/><circle cx="6.5" cy="7.2" r="1.75" fill="#383838"/><rect x="11.2" y="6.3" width="11.4" height="1.8" rx="0.5" fill="#383838"/><circle cx="6.5" cy="13.4" r="1.75" fill="#383838"/><rect x="11.2" y="12.5" width="11.4" height="1.8" rx="0.5" fill="#383838"/><circle cx="6.5" cy="19.7" r="1.75" fill="#383838"/><rect x="11.2" y="18.8" width="11.4" height="1.8" rx="0.5" fill="#383838"/></svg>
<svg style="position:absolute;left:1079.8px;top:1161.2px;" width="27.3" height="27" viewBox="0 0 27.3 27"><rect x="0" y="0" width="27.3" height="27" rx="3" fill="#fff"/><circle cx="6.5" cy="7.2" r="1.75" fill="#383838"/><rect x="11.2" y="6.3" width="11.4" height="1.8" rx="0.5" fill="#383838"/><circle cx="6.5" cy="13.4" r="1.75" fill="#383838"/><rect x="11.2" y="12.5" width="11.4" height="1.8" rx="0.5" fill="#383838"/><circle cx="6.5" cy="19.7" r="1.75" fill="#383838"/><rect x="11.2" y="18.8" width="11.4" height="1.8" rx="0.5" fill="#383838"/></svg>
<svg style="position:absolute;left:1079.8px;top:1193.2px;" width="27.3" height="27" viewBox="0 0 27.3 27"><rect x="0" y="0" width="27.3" height="27" rx="3" fill="#fff"/><circle cx="6.5" cy="7.2" r="1.75" fill="#383838"/><rect x="11.2" y="6.3" width="11.4" height="1.8" rx="0.5" fill="#383838"/><circle cx="6.5" cy="13.4" r="1.75" fill="#383838"/><rect x="11.2" y="12.5" width="11.4" height="1.8" rx="0.5" fill="#383838"/><circle cx="6.5" cy="19.7" r="1.75" fill="#383838"/><rect x="11.2" y="18.8" width="11.4" height="1.8" rx="0.5" fill="#383838"/></svg>
<svg style="position:absolute;left:1079.8px;top:1225.2px;" width="27.3" height="27" viewBox="0 0 27.3 27"><rect x="0" y="0" width="27.3" height="27" rx="3" fill="#fff"/><circle cx="6.5" cy="7.2" r="1.75" fill="#383838"/><rect x="11.2" y="6.3" width="11.4" height="1.8" rx="0.5" fill="#383838"/><circle cx="6.5" cy="13.4" r="1.75" fill="#383838"/><rect x="11.2" y="12.5" width="11.4" height="1.8" rx="0.5" fill="#383838"/><circle cx="6.5" cy="19.7" r="1.75" fill="#383838"/><rect x="11.2" y="18.8" width="11.4" height="1.8" rx="0.5" fill="#383838"/></svg>
<svg style="position:absolute;left:1079.8px;top:1257.2px;" width="27.3" height="27" viewBox="0 0 27.3 27"><rect x="0" y="0" width="27.3" height="27" rx="3" fill="#fff"/><circle cx="6.5" cy="7.2" r="1.75" fill="#383838"/><rect x="11.2" y="6.3" width="11.4" height="1.8" rx="0.5" fill="#383838"/><circle cx="6.5" cy="13.4" r="1.75" fill="#383838"/><rect x="11.2" y="12.5" width="11.4" height="1.8" rx="0.5" fill="#383838"/><circle cx="6.5" cy="19.7" r="1.75" fill="#383838"/><rect x="11.2" y="18.8" width="11.4" height="1.8" rx="0.5" fill="#383838"/></svg>
<svg style="position:absolute;left:1079.8px;top:1289.2px;" width="27.3" height="27" viewBox="0 0 27.3 27"><rect x="0" y="0" width="27.3" height="27" rx="3" fill="#fff"/><circle cx="6.5" cy="7.2" r="1.75" fill="#383838"/><rect x="11.2" y="6.3" width="11.4" height="1.8" rx="0.5" fill="#383838"/><circle cx="6.5" cy="13.4" r="1.75" fill="#383838"/><rect x="11.2" y="12.5" width="11.4" height="1.8" rx="0.5" fill="#383838"/><circle cx="6.5" cy="19.7" r="1.75" fill="#383838"/><rect x="11.2" y="18.8" width="11.4" height="1.8" rx="0.5" fill="#383838"/></svg>
<svg style="position:absolute;left:1079.8px;top:1321.2px;" width="27.3" height="27" viewBox="0 0 27.3 27"><rect x="0" y="0" width="27.3" height="27" rx="3" fill="#fff"/><circle cx="6.5" cy="7.2" r="1.75" fill="#383838"/><rect x="11.2" y="6.3" width="11.4" height="1.8" rx="0.5" fill="#383838"/><circle cx="6.5" cy="13.4" r="1.75" fill="#383838"/><rect x="11.2" y="12.5" width="11.4" height="1.8" rx="0.5" fill="#383838"/><circle cx="6.5" cy="19.7" r="1.75" fill="#383838"/><rect x="11.2" y="18.8" width="11.4" height="1.8" rx="0.5" fill="#383838"/></svg>
<div style="position:absolute;left:0;top:0;width:3258px;height:2160px;overflow:hidden"><span class="t" style="left:1073.09px;top:231.7px;height:32px;line-height:32px;font-size:26px;transform:scaleX(0.9100);">Local</span>
<span class="t" style="left:1145.81px;top:231.7px;height:32px;line-height:32px;font-size:26px;transform:scaleX(0.9144);">Variables</span>
<span class="t" style="left:1073.07px;top:263.7px;height:32px;line-height:32px;font-size:26px;transform:scaleX(0.9269);">Events</span>
<span class="t" style="left:1115.40px;top:295.7px;height:32px;line-height:32px;font-size:26px;transform:scaleX(0.9044);">Hero</span>
<span class="t" style="left:1183.05px;top:295.7px;height:32px;line-height:32px;font-size:26px;transform:scaleX(0.9209);">interacts</span>
<span class="t" style="left:1298.80px;top:295.7px;height:32px;line-height:32px;font-size:26px;transform:scaleX(0.9209);">with</span>
<span class="t" style="left:1364.76px;top:295.7px;height:32px;line-height:32px;font-size:26px;transform:scaleX(0.9391);font-weight:bold;-webkit-text-stroke-width:0.2px;">Captain</span>
<span class="t" style="left:1481.80px;top:295.7px;height:32px;line-height:32px;font-size:26px;transform:scaleX(0.9406);font-weight:bold;-webkit-text-stroke-width:0.2px;">Thorne</span>
<span class="t" style="left:1589.22px;top:295.7px;height:32px;line-height:32px;font-size:26px;transform:scaleX(0.8914);font-weight:bold;-webkit-text-stroke-width:0.2px;">(226,</span>
<span class="t" style="left:1662.21px;top:295.7px;height:32px;line-height:32px;font-size:26px;transform:scaleX(0.8634);font-weight:bold;-webkit-text-stroke-width:0.2px;">145)</span>
<span class="t" style="left:1730.51px;top:295.7px;height:32px;line-height:32px;font-size:26px;transform:scaleX(0.8956);">.</span>
<span class="t" style="left:1745.70px;top:295.7px;height:32px;line-height:32px;font-size:26px;transform:scaleX(0.9090);">Additionally,</span>
<span class="t" style="left:1904.95px;top:295.7px;height:32px;line-height:32px;font-size:26px;transform:scaleX(0.9154);">store</span>
<span class="t" style="left:1974.30px;top:295.7px;height:32px;line-height:32px;font-size:26px;transform:scaleX(0.9154);">it</span>
<span class="t" style="left:1999.27px;top:295.7px;height:32px;line-height:32px;font-size:26px;transform:scaleX(0.9154);">in</span>
<span class="t" style="left:2035.87px;top:295.7px;height:32px;line-height:32px;font-size:26px;transform:scaleX(0.9300);font-weight:bold;-webkit-text-stroke-width:0.2px;">NULL</span>
<span class="t" style="left:1073.07px;top:327.7px;height:32px;line-height:32px;font-size:26px;transform:scaleX(0.9315);">Conditions</span>
<span class="t" style="left:1115.36px;top:359.7px;height:32px;line-height:32px;font-size:26px;transform:scaleX(0.9364);font-weight:bold;-webkit-text-stroke-width:0.2px;">Securing</span>
<span class="t" style="left:1246.62px;top:359.7px;height:32px;line-height:32px;font-size:26px;transform:scaleX(0.9443);font-weight:bold;-webkit-text-stroke-width:0.2px;">the</span>
<span class="t" style="left:1300.29px;top:359.7px;height:32px;line-height:32px;font-size:26px;transform:scaleX(0.9370);font-weight:bold;-webkit-text-stroke-width:0.2px;">Perimeter</span>
<span class="t" style="left:1449.90px;top:359.7px;height:32px;line-height:32px;font-size:26px;transform:scaleX(0.9026);">quest</span>
<span class="t" style="left:1523.08px;top:359.7px;height:32px;line-height:32px;font-size:26px;transform:scaleX(0.9026);">state</span>
<span class="t" style="left:1589.55px;top:359.7px;height:32px;line-height:32px;font-size:26px;transform:scaleX(0.9026);">is</span>
<span class="t" style="left:1621.87px;top:359.7px;height:32px;line-height:32px;font-size:26px;transform:scaleX(0.9339);font-weight:bold;-webkit-text-stroke-width:0.2px;">Completed</span>
<span class="t" style="left:1115.37px;top:391.7px;height:32px;line-height:32px;font-size:26px;transform:scaleX(0.9269);font-weight:bold;-webkit-text-stroke-width:0.2px;">Heart</span>
<span class="t" style="left:1201.77px;top:391.7px;height:32px;line-height:32px;font-size:26px;transform:scaleX(0.9430);font-weight:bold;-webkit-text-stroke-width:0.2px;">of</span>
<span class="t" style="left:1237.51px;top:391.7px;height:32px;line-height:32px;font-size:26px;transform:scaleX(0.9430);font-weight:bold;-webkit-text-stroke-width:0.2px;">the</span>
<span class="t" style="left:1291.11px;top:391.7px;height:32px;line-height:32px;font-size:26px;transform:scaleX(0.9234);font-weight:bold;-webkit-text-stroke-width:0.2px;">City</span>
<span class="t" style="left:1357.20px;top:391.7px;height:32px;line-height:32px;font-size:26px;transform:scaleX(0.9026);">quest</span>
<span class="t" style="left:1430.38px;top:391.7px;height:32px;line-height:32px;font-size:26px;transform:scaleX(0.9026);">state</span>
<span class="t" style="left:1496.85px;top:391.7px;height:32px;line-height:32px;font-size:26px;transform:scaleX(0.9026);">is</span>
<span class="t" style="left:1531.09px;top:391.7px;height:32px;line-height:32px;font-size:26px;transform:scaleX(0.9856);font-weight:bold;-webkit-text-stroke-width:0.2px;">Active</span>
<span class="t" style="left:1074.93px;top:423.7px;height:32px;line-height:32px;font-size:26px;transform:scaleX(0.9269);">Actions</span>
<span class="t" style="left:1115.37px;top:455.7px;height:32px;line-height:32px;font-size:26px;transform:scaleX(0.9349);font-weight:bold;-webkit-text-stroke-width:0.2px;">Disable</span>
<span class="t" style="left:1230.10px;top:455.7px;height:32px;line-height:32px;font-size:26px;transform:scaleX(0.9114);">this</span>
<span class="t" style="left:1282.38px;top:455.7px;height:32px;line-height:32px;font-size:26px;transform:scaleX(0.9114);">trigger</span>
<span class="t" style="left:1115.38px;top:487.7px;height:32px;line-height:32px;font-size:26px;transform:scaleX(0.9228);font-weight:bold;-webkit-text-stroke-width:0.2px;">Hide</span>
<span class="t" style="left:1191.59px;top:487.7px;height:32px;line-height:32px;font-size:26px;transform:scaleX(0.9060);">quest</span>
<span class="t" style="left:1265.05px;top:487.7px;height:32px;line-height:32px;font-size:26px;transform:scaleX(0.9060);">accept</span>
<span class="t" style="left:1351.68px;top:487.7px;height:32px;line-height:32px;font-size:26px;transform:scaleX(0.9060);">marker</span>
<span class="t" style="left:1446.50px;top:487.7px;height:32px;line-height:32px;font-size:26px;transform:scaleX(0.9060);">over</span>
<span class="t" style="left:1511.96px;top:487.7px;height:32px;line-height:32px;font-size:26px;transform:scaleX(0.9391);font-weight:bold;-webkit-text-stroke-width:0.2px;">Captain</span>
<span class="t" style="left:1629.00px;top:487.7px;height:32px;line-height:32px;font-size:26px;transform:scaleX(0.9406);font-weight:bold;-webkit-text-stroke-width:0.2px;">Thorne</span>
<span class="t" style="left:1736.42px;top:487.7px;height:32px;line-height:32px;font-size:26px;transform:scaleX(0.8914);font-weight:bold;-webkit-text-stroke-width:0.2px;">(226,</span>
<span class="t" style="left:1809.41px;top:487.7px;height:32px;line-height:32px;font-size:26px;transform:scaleX(0.8634);font-weight:bold;-webkit-text-stroke-width:0.2px;">145)</span>
<span class="t" style="left:1114.55px;top:519.7px;height:32px;line-height:32px;font-size:26px;transform:scaleX(0.8768);">Set</span>
<span class="t" style="left:1166.16px;top:519.7px;height:32px;line-height:32px;font-size:26px;transform:scaleX(0.9391);font-weight:bold;-webkit-text-stroke-width:0.2px;">Captain</span>
<span class="t" style="left:1283.20px;top:519.7px;height:32px;line-height:32px;font-size:26px;transform:scaleX(0.9406);font-weight:bold;-webkit-text-stroke-width:0.2px;">Thorne</span>
<span class="t" style="left:1390.62px;top:519.7px;height:32px;line-height:32px;font-size:26px;transform:scaleX(0.8914);font-weight:bold;-webkit-text-stroke-width:0.2px;">(226,</span>
<span class="t" style="left:1463.61px;top:519.7px;height:32px;line-height:32px;font-size:26px;transform:scaleX(0.8634);font-weight:bold;-webkit-text-stroke-width:0.2px;">145)</span>
<span class="t" style="left:1532.76px;top:519.7px;height:32px;line-height:32px;font-size:26px;transform:scaleX(0.9428);font-weight:bold;-webkit-text-stroke-width:0.2px;">NonInteractable</span>
<span class="t" style="left:1115.36px;top:551.7px;height:32px;line-height:32px;font-size:26px;transform:scaleX(0.9447);">Make</span>
<span class="t" style="left:1197.10px;top:551.7px;height:32px;line-height:32px;font-size:26px;transform:scaleX(0.8964);font-weight:bold;-webkit-text-stroke-width:0.2px;">#Hero</span>
<span class="t" style="left:1294.80px;top:551.7px;height:32px;line-height:32px;font-size:26px;transform:scaleX(0.9052);">face</span>
<span class="t" style="left:1357.16px;top:551.7px;height:32px;line-height:32px;font-size:26px;transform:scaleX(0.9391);font-weight:bold;-webkit-text-stroke-width:0.2px;">Captain</span>
<span class="t" style="left:1474.20px;top:551.7px;height:32px;line-height:32px;font-size:26px;transform:scaleX(0.9406);font-weight:bold;-webkit-text-stroke-width:0.2px;">Thorne</span>
<span class="t" style="left:1581.62px;top:551.7px;height:32px;line-height:32px;font-size:26px;transform:scaleX(0.8914);font-weight:bold;-webkit-text-stroke-width:0.2px;">(226,</span>
<span class="t" style="left:1654.61px;top:551.7px;height:32px;line-height:32px;font-size:26px;transform:scaleX(0.8634);font-weight:bold;-webkit-text-stroke-width:0.2px;">145)</span>
<span class="t" style="left:1115.36px;top:583.7px;height:32px;line-height:32px;font-size:26px;transform:scaleX(0.9447);">Make</span>
<span class="t" style="left:1197.06px;top:583.7px;height:32px;line-height:32px;font-size:26px;transform:scaleX(0.9391);font-weight:bold;-webkit-text-stroke-width:0.2px;">Captain</span>
<span class="t" style="left:1314.10px;top:583.7px;height:32px;line-height:32px;font-size:26px;transform:scaleX(0.9406);font-weight:bold;-webkit-text-stroke-width:0.2px;">Thorne</span>
<span class="t" style="left:1421.52px;top:583.7px;height:32px;line-height:32px;font-size:26px;transform:scaleX(0.8914);font-weight:bold;-webkit-text-stroke-width:0.2px;">(226,</span>
<span class="t" style="left:1494.51px;top:583.7px;height:32px;line-height:32px;font-size:26px;transform:scaleX(0.8634);font-weight:bold;-webkit-text-stroke-width:0.2px;">145)</span>
<span class="t" style="left:1564.60px;top:583.7px;height:32px;line-height:32px;font-size:26px;transform:scaleX(0.9052);">face</span>
<span class="t" style="left:1627.00px;top:583.7px;height:32px;line-height:32px;font-size:26px;transform:scaleX(0.8964);font-weight:bold;-webkit-text-stroke-width:0.2px;">#Hero</span>
<span class="t" style="left:1114.46px;top:615.7px;height:32px;line-height:32px;font-size:26px;transform:scaleX(0.9215);color:#fde5a9;">Show</span>
<span class="t" style="left:1189.18px;top:615.7px;height:32px;line-height:32px;font-size:26px;transform:scaleX(0.9335);color:#fde5a9;">dialogue</span>
<span class="t" style="left:1308.56px;top:615.7px;height:32px;line-height:32px;font-size:26px;transform:scaleX(0.9367);font-weight:bold;-webkit-text-stroke-width:0.2px;color:#fde5a9;">BubbleAndBox</span>
<span class="t" style="left:1523.99px;top:615.7px;height:32px;line-height:32px;font-size:26px;transform:scaleX(0.9146);color:#fde5a9;">over</span>
<span class="t" style="left:1590.56px;top:615.7px;height:32px;line-height:32px;font-size:26px;transform:scaleX(0.9391);font-weight:bold;-webkit-text-stroke-width:0.2px;color:#fde5a9;">Captain</span>
<span class="t" style="left:1707.60px;top:615.7px;height:32px;line-height:32px;font-size:26px;transform:scaleX(0.9406);font-weight:bold;-webkit-text-stroke-width:0.2px;color:#fde5a9;">Thorne</span>
<span class="t" style="left:1815.02px;top:615.7px;height:32px;line-height:32px;font-size:26px;transform:scaleX(0.8914);font-weight:bold;-webkit-text-stroke-width:0.2px;color:#fde5a9;">(226,</span>
<span class="t" style="left:1888.01px;top:615.7px;height:32px;line-height:32px;font-size:26px;transform:scaleX(0.8634);font-weight:bold;-webkit-text-stroke-width:0.2px;color:#fde5a9;">145)</span>
<span class="t" style="left:1958.10px;top:615.7px;height:32px;line-height:32px;font-size:26px;transform:scaleX(0.9467);color:#fde5a9;">with</span>
<span class="t" style="left:2020.84px;top:615.7px;height:32px;line-height:32px;font-size:26px;transform:scaleX(0.9467);color:#fde5a9;">content</span>
<span class="t" style="left:2128.30px;top:615.7px;height:32px;line-height:32px;font-size:26px;transform:scaleX(0.9249);font-weight:bold;-webkit-text-stroke-width:0.2px;color:#fde5a9;">The</span>
<span class="t" style="left:2187.83px;top:615.7px;height:32px;line-height:32px;font-size:26px;transform:scaleX(0.9256);font-weight:bold;-webkit-text-stroke-width:0.2px;color:#fde5a9;">Keep’s</span>
<span class="t" style="left:2286.98px;top:615.7px;height:32px;line-height:32px;font-size:26px;transform:scaleX(0.9338);font-weight:bold;-webkit-text-stroke-width:0.2px;color:#fde5a9;">construct...</span>
<span class="t" style="left:2455.10px;top:615.7px;height:32px;line-height:32px;font-size:26px;transform:scaleX(0.9501);color:#fde5a9;">using</span>
<span class="t" style="left:2535.57px;top:615.7px;height:32px;line-height:32px;font-size:26px;transform:scaleX(0.9300);font-weight:bold;-webkit-text-stroke-width:0.2px;color:#fde5a9;">NULL</span>
<span class="t" style="left:2627.23px;top:615.7px;height:32px;line-height:32px;font-size:26px;transform:scaleX(0.9334);color:#fde5a9;">voiceover</span>
<span class="t" style="left:2753.50px;top:615.7px;height:32px;line-height:32px;font-size:26px;transform:scaleX(0.9315);color:#fde5a9;">sound.</span>
<span class="t" style="left:2842.85px;top:615.7px;height:32px;line-height:32px;font-size:26px;transform:scaleX(0.9192);color:#fde5a9;">That</span>
<span class="t" style="left:2908.95px;top:615.7px;height:32px;line-height:32px;font-size:26px;transform:scaleX(0.9515);font-weight:bold;-webkit-text-stroke-width:0.2px;color:#fde5a9;">IsSkippable</span>
<span class="t" style="left:3083.36px;top:615.7px;height:32px;line-height:32px;font-size:26px;transform:scaleX(0.9200);color:#fde5a9;">. Modify duration by</span>
<span class="t" style="left:3343.47px;top:615.7px;height:32px;line-height:32px;font-size:26px;transform:scaleX(0.9250);font-weight:bold;-webkit-text-stroke-width:0.2px;color:#fde5a9;">0</span>
<span class="t" style="left:3372.05px;top:615.7px;height:32px;line-height:32px;font-size:26px;transform:scaleX(0.9451);color:#fde5a9;">seconds</span>
<span class="t" style="left:1117.27px;top:647.7px;height:32px;line-height:32px;font-size:26px;transform:scaleX(0.9676);font-weight:bold;-webkit-text-stroke-width:0.2px;">Activate</span>
<span class="t" style="left:1244.18px;top:647.7px;height:32px;line-height:32px;font-size:26px;transform:scaleX(0.9222);font-weight:bold;-webkit-text-stroke-width:0.2px;">Keep</span>
<span class="t" style="left:1321.10px;top:647.7px;height:32px;line-height:32px;font-size:26px;transform:scaleX(0.8232);font-weight:bold;-webkit-text-stroke-width:0.2px;">(218,</span>
<span class="t" style="left:1392.15px;top:647.7px;height:32px;line-height:32px;font-size:26px;transform:scaleX(0.8160);font-weight:bold;-webkit-text-stroke-width:0.2px;">144)</span>
<span class="t" style="left:1459.25px;top:647.7px;height:32px;line-height:32px;font-size:26px;transform:scaleX(0.9490);">entity</span>
<span class="t" style="left:1117.27px;top:679.7px;height:32px;line-height:32px;font-size:26px;transform:scaleX(0.9676);font-weight:bold;-webkit-text-stroke-width:0.2px;">Activate</span>
<span class="t" style="left:1246.04px;top:679.7px;height:32px;line-height:32px;font-size:26px;transform:scaleX(0.9429);font-weight:bold;-webkit-text-stroke-width:0.2px;">Worker</span>
<span class="t" style="left:1357.32px;top:679.7px;height:32px;line-height:32px;font-size:26px;transform:scaleX(0.9477);font-weight:bold;-webkit-text-stroke-width:0.2px;">John</span>
<span class="t" style="left:1430.23px;top:679.7px;height:32px;line-height:32px;font-size:26px;transform:scaleX(0.8398);font-weight:bold;-webkit-text-stroke-width:0.2px;">(215,</span>
<span class="t" style="left:1502.72px;top:679.7px;height:32px;line-height:32px;font-size:26px;transform:scaleX(0.8325);font-weight:bold;-webkit-text-stroke-width:0.2px;">145)</span>
<span class="t" style="left:1569.05px;top:679.7px;height:32px;line-height:32px;font-size:26px;transform:scaleX(0.9490);">entity</span>
<span class="t" style="left:1117.27px;top:711.7px;height:32px;line-height:32px;font-size:26px;transform:scaleX(0.9676);font-weight:bold;-webkit-text-stroke-width:0.2px;">Activate</span>
<span class="t" style="left:1246.03px;top:711.7px;height:32px;line-height:32px;font-size:26px;transform:scaleX(0.9280);font-weight:bold;-webkit-text-stroke-width:0.2px;">Worker</span>
<span class="t" style="left:1355.55px;top:711.7px;height:32px;line-height:32px;font-size:26px;transform:scaleX(0.9280);font-weight:bold;-webkit-text-stroke-width:0.2px;">Duski</span>
<span class="t" style="left:1442.33px;top:711.7px;height:32px;line-height:32px;font-size:26px;transform:scaleX(0.8265);font-weight:bold;-webkit-text-stroke-width:0.2px;">(217,</span>
<span class="t" style="left:1513.68px;top:711.7px;height:32px;line-height:32px;font-size:26px;transform:scaleX(0.8194);font-weight:bold;-webkit-text-stroke-width:0.2px;">145)</span>
<span class="t" style="left:1579.15px;top:711.7px;height:32px;line-height:32px;font-size:26px;transform:scaleX(0.9490);">entity</span>
<span class="t" style="left:1117.27px;top:743.7px;height:32px;line-height:32px;font-size:26px;transform:scaleX(0.9676);font-weight:bold;-webkit-text-stroke-width:0.2px;">Activate</span>
<span class="t" style="left:1244.19px;top:743.7px;height:32px;line-height:32px;font-size:26px;transform:scaleX(0.9124);font-weight:bold;-webkit-text-stroke-width:0.2px;">Master</span>
<span class="t" style="left:1349.26px;top:743.7px;height:32px;line-height:32px;font-size:26px;transform:scaleX(0.9369);font-weight:bold;-webkit-text-stroke-width:0.2px;">Roderick</span>
<span class="t" style="left:1480.77px;top:743.7px;height:32px;line-height:32px;font-size:26px;transform:scaleX(0.9165);font-weight:bold;-webkit-text-stroke-width:0.2px;">(206,</span>
<span class="t" style="left:1554.72px;top:743.7px;height:32px;line-height:32px;font-size:26px;transform:scaleX(0.8585);font-weight:bold;-webkit-text-stroke-width:0.2px;">133)</span>
<span class="t" style="left:1622.55px;top:743.7px;height:32px;line-height:32px;font-size:26px;transform:scaleX(0.9490);">entity</span>
<span class="t" style="left:1115.36px;top:775.7px;height:32px;line-height:32px;font-size:26px;transform:scaleX(0.9447);">Make</span>
<span class="t" style="left:1197.06px;top:775.7px;height:32px;line-height:32px;font-size:26px;transform:scaleX(0.9391);font-weight:bold;-webkit-text-stroke-width:0.2px;">Captain</span>
<span class="t" style="left:1314.10px;top:775.7px;height:32px;line-height:32px;font-size:26px;transform:scaleX(0.9406);font-weight:bold;-webkit-text-stroke-width:0.2px;">Thorne</span>
<span class="t" style="left:1421.52px;top:775.7px;height:32px;line-height:32px;font-size:26px;transform:scaleX(0.8914);font-weight:bold;-webkit-text-stroke-width:0.2px;">(226,</span>
<span class="t" style="left:1494.51px;top:775.7px;height:32px;line-height:32px;font-size:26px;transform:scaleX(0.8634);font-weight:bold;-webkit-text-stroke-width:0.2px;">145)</span>
<span class="t" style="left:1564.60px;top:775.7px;height:32px;line-height:32px;font-size:26px;transform:scaleX(0.9052);">face</span>
<span class="t" style="left:1626.99px;top:775.7px;height:32px;line-height:32px;font-size:26px;transform:scaleX(0.9124);font-weight:bold;-webkit-text-stroke-width:0.2px;">Master</span>
<span class="t" style="left:1732.06px;top:775.7px;height:32px;line-height:32px;font-size:26px;transform:scaleX(0.9369);font-weight:bold;-webkit-text-stroke-width:0.2px;">Roderick</span>
<span class="t" style="left:1863.57px;top:775.7px;height:32px;line-height:32px;font-size:26px;transform:scaleX(0.9165);font-weight:bold;-webkit-text-stroke-width:0.2px;">(206,</span>
<span class="t" style="left:1937.52px;top:775.7px;height:32px;line-height:32px;font-size:26px;transform:scaleX(0.8585);font-weight:bold;-webkit-text-stroke-width:0.2px;">133)</span>
<span class="t" style="left:1115.36px;top:807.7px;height:32px;line-height:32px;font-size:26px;transform:scaleX(0.9447);">Make</span>
<span class="t" style="left:1197.10px;top:807.7px;height:32px;line-height:32px;font-size:26px;transform:scaleX(0.8964);font-weight:bold;-webkit-text-stroke-width:0.2px;">#Hero</span>
<span class="t" style="left:1294.80px;top:807.7px;height:32px;line-height:32px;font-size:26px;transform:scaleX(0.9052);">face</span>
<span class="t" style="left:1357.19px;top:807.7px;height:32px;line-height:32px;font-size:26px;transform:scaleX(0.9124);font-weight:bold;-webkit-text-stroke-width:0.2px;">Master</span>
<span class="t" style="left:1462.26px;top:807.7px;height:32px;line-height:32px;font-size:26px;transform:scaleX(0.9369);font-weight:bold;-webkit-text-stroke-width:0.2px;">Roderick</span>
<span class="t" style="left:1593.77px;top:807.7px;height:32px;line-height:32px;font-size:26px;transform:scaleX(0.9165);font-weight:bold;-webkit-text-stroke-width:0.2px;">(206,</span>
<span class="t" style="left:1667.72px;top:807.7px;height:32px;line-height:32px;font-size:26px;transform:scaleX(0.8585);font-weight:bold;-webkit-text-stroke-width:0.2px;">133)</span>
<span class="t" style="left:1115.37px;top:839.7px;height:32px;line-height:32px;font-size:26px;transform:scaleX(0.9349);font-weight:bold;-webkit-text-stroke-width:0.2px;">Disable</span>
<span class="t" style="left:1230.10px;top:839.7px;height:32px;line-height:32px;font-size:26px;transform:scaleX(0.9137);">player</span>
<span class="t" style="left:1313.68px;top:839.7px;height:32px;line-height:32px;font-size:26px;transform:scaleX(0.9137);">controls</span>
<span class="t" style="left:1419.35px;top:839.7px;height:32px;line-height:32px;font-size:26px;transform:scaleX(0.9137);">for</span>
<span class="t" style="left:1465.69px;top:839.7px;height:32px;line-height:32px;font-size:26px;transform:scaleX(0.9124);font-weight:bold;-webkit-text-stroke-width:0.2px;">Master</span>
<span class="t" style="left:1570.76px;top:839.7px;height:32px;line-height:32px;font-size:26px;transform:scaleX(0.9369);font-weight:bold;-webkit-text-stroke-width:0.2px;">Roderick</span>
<span class="t" style="left:1702.27px;top:839.7px;height:32px;line-height:32px;font-size:26px;transform:scaleX(0.9165);font-weight:bold;-webkit-text-stroke-width:0.2px;">(206,</span>
<span class="t" style="left:1776.22px;top:839.7px;height:32px;line-height:32px;font-size:26px;transform:scaleX(0.8585);font-weight:bold;-webkit-text-stroke-width:0.2px;">133)</span>
<span class="t" style="left:1845.00px;top:839.7px;height:32px;line-height:32px;font-size:26px;transform:scaleX(0.9298);">unit</span>
<span class="t" style="left:1115.36px;top:871.7px;height:32px;line-height:32px;font-size:26px;transform:scaleX(0.9447);">Make</span>
<span class="t" style="left:1197.09px;top:871.7px;height:32px;line-height:32px;font-size:26px;transform:scaleX(0.9124);font-weight:bold;-webkit-text-stroke-width:0.2px;">Master</span>
<span class="t" style="left:1302.16px;top:871.7px;height:32px;line-height:32px;font-size:26px;transform:scaleX(0.9369);font-weight:bold;-webkit-text-stroke-width:0.2px;">Roderick</span>
<span class="t" style="left:1433.67px;top:871.7px;height:32px;line-height:32px;font-size:26px;transform:scaleX(0.9165);font-weight:bold;-webkit-text-stroke-width:0.2px;">(206,</span>
<span class="t" style="left:1507.62px;top:871.7px;height:32px;line-height:32px;font-size:26px;transform:scaleX(0.8585);font-weight:bold;-webkit-text-stroke-width:0.2px;">133)</span>
<span class="t" style="left:1576.40px;top:871.7px;height:32px;line-height:32px;font-size:26px;transform:scaleX(0.9291);">unit</span>
<span class="t" style="left:1632.85px;top:871.7px;height:32px;line-height:32px;font-size:26px;transform:scaleX(0.9291);">move</span>
<span class="t" style="left:1706.15px;top:871.7px;height:32px;line-height:32px;font-size:26px;transform:scaleX(0.9291);">to</span>
<span class="t" style="left:1741.51px;top:871.7px;height:32px;line-height:32px;font-size:26px;transform:scaleX(0.8472);font-weight:bold;-webkit-text-stroke-width:0.2px;">(198.45,</span>
<span class="t" style="left:1852.99px;top:871.7px;height:32px;line-height:32px;font-size:26px;transform:scaleX(0.8427);font-weight:bold;-webkit-text-stroke-width:0.2px;">126.58)</span>
<span class="t" style="left:1960.73px;top:871.7px;height:32px;line-height:32px;font-size:26px;transform:scaleX(0.9666);font-weight:bold;-webkit-text-stroke-width:0.2px;">Position</span>
<span class="t" style="left:2089.50px;top:871.7px;height:32px;line-height:32px;font-size:26px;transform:scaleX(0.9480);">with</span>
<span class="t" style="left:2157.35px;top:871.7px;height:32px;line-height:32px;font-size:26px;transform:scaleX(0.9532);font-weight:bold;-webkit-text-stroke-width:0.2px;">Normal</span>
<span class="t" style="left:2275.20px;top:871.7px;height:32px;line-height:32px;font-size:26px;transform:scaleX(0.9314);">pace.</span>
<span class="t" style="left:2348.67px;top:871.7px;height:32px;line-height:32px;font-size:26px;transform:scaleX(0.9164);">When</span>
<span class="t" style="left:2425.90px;top:871.7px;height:32px;line-height:32px;font-size:26px;transform:scaleX(0.9323);">finished,</span>
<span class="t" style="left:2543.48px;top:871.7px;height:32px;line-height:32px;font-size:26px;transform:scaleX(0.9195);font-weight:bold;-webkit-text-stroke-width:0.2px;">DoNotRotate</span>
<span class="t" style="left:1116.30px;top:903.7px;height:32px;line-height:32px;font-size:26px;transform:scaleX(0.9683);">Wait</span>
<span class="t" style="left:1186.56px;top:903.7px;height:32px;line-height:32px;font-size:26px;transform:scaleX(0.9353);font-weight:bold;-webkit-text-stroke-width:0.2px;">4</span>
<span class="t" style="left:1216.25px;top:903.7px;height:32px;line-height:32px;font-size:26px;transform:scaleX(0.9451);">seconds</span>
<span class="t" style="left:1115.36px;top:935.7px;height:32px;line-height:32px;font-size:26px;transform:scaleX(0.9447);">Make</span>
<span class="t" style="left:1197.09px;top:935.7px;height:32px;line-height:32px;font-size:26px;transform:scaleX(0.9124);font-weight:bold;-webkit-text-stroke-width:0.2px;">Master</span>
<span class="t" style="left:1302.16px;top:935.7px;height:32px;line-height:32px;font-size:26px;transform:scaleX(0.9369);font-weight:bold;-webkit-text-stroke-width:0.2px;">Roderick</span>
<span class="t" style="left:1433.67px;top:935.7px;height:32px;line-height:32px;font-size:26px;transform:scaleX(0.9165);font-weight:bold;-webkit-text-stroke-width:0.2px;">(206,</span>
<span class="t" style="left:1507.62px;top:935.7px;height:32px;line-height:32px;font-size:26px;transform:scaleX(0.8585);font-weight:bold;-webkit-text-stroke-width:0.2px;">133)</span>
<span class="t" style="left:1576.40px;top:935.7px;height:32px;line-height:32px;font-size:26px;transform:scaleX(0.9052);">face</span>
<span class="t" style="left:1638.76px;top:935.7px;height:32px;line-height:32px;font-size:26px;transform:scaleX(0.9391);font-weight:bold;-webkit-text-stroke-width:0.2px;">Captain</span>
<span class="t" style="left:1755.80px;top:935.7px;height:32px;line-height:32px;font-size:26px;transform:scaleX(0.9406);font-weight:bold;-webkit-text-stroke-width:0.2px;">Thorne</span>
<span class="t" style="left:1863.22px;top:935.7px;height:32px;line-height:32px;font-size:26px;transform:scaleX(0.8914);font-weight:bold;-webkit-text-stroke-width:0.2px;">(226,</span>
<span class="t" style="left:1936.21px;top:935.7px;height:32px;line-height:32px;font-size:26px;transform:scaleX(0.8634);font-weight:bold;-webkit-text-stroke-width:0.2px;">145)</span>
<span class="t" style="left:1115.36px;top:967.7px;height:32px;line-height:32px;font-size:26px;transform:scaleX(0.9447);">Make</span>
<span class="t" style="left:1197.06px;top:967.7px;height:32px;line-height:32px;font-size:26px;transform:scaleX(0.9391);font-weight:bold;-webkit-text-stroke-width:0.2px;">Captain</span>
<span class="t" style="left:1314.10px;top:967.7px;height:32px;line-height:32px;font-size:26px;transform:scaleX(0.9406);font-weight:bold;-webkit-text-stroke-width:0.2px;">Thorne</span>
<span class="t" style="left:1421.52px;top:967.7px;height:32px;line-height:32px;font-size:26px;transform:scaleX(0.8914);font-weight:bold;-webkit-text-stroke-width:0.2px;">(226,</span>
<span class="t" style="left:1494.51px;top:967.7px;height:32px;line-height:32px;font-size:26px;transform:scaleX(0.8634);font-weight:bold;-webkit-text-stroke-width:0.2px;">145)</span>
<span class="t" style="left:1564.60px;top:967.7px;height:32px;line-height:32px;font-size:26px;transform:scaleX(0.9052);">face</span>
<span class="t" style="left:1626.99px;top:967.7px;height:32px;line-height:32px;font-size:26px;transform:scaleX(0.9124);font-weight:bold;-webkit-text-stroke-width:0.2px;">Master</span>
<span class="t" style="left:1732.06px;top:967.7px;height:32px;line-height:32px;font-size:26px;transform:scaleX(0.9369);font-weight:bold;-webkit-text-stroke-width:0.2px;">Roderick</span>
<span class="t" style="left:1863.57px;top:967.7px;height:32px;line-height:32px;font-size:26px;transform:scaleX(0.9165);font-weight:bold;-webkit-text-stroke-width:0.2px;">(206,</span>
<span class="t" style="left:1937.52px;top:967.7px;height:32px;line-height:32px;font-size:26px;transform:scaleX(0.8585);font-weight:bold;-webkit-text-stroke-width:0.2px;">133)</span>
<span class="t" style="left:1115.36px;top:999.7px;height:32px;line-height:32px;font-size:26px;transform:scaleX(0.9447);">Make</span>
<span class="t" style="left:1197.10px;top:999.7px;height:32px;line-height:32px;font-size:26px;transform:scaleX(0.8964);font-weight:bold;-webkit-text-stroke-width:0.2px;">#Hero</span>
<span class="t" style="left:1294.80px;top:999.7px;height:32px;line-height:32px;font-size:26px;transform:scaleX(0.9052);">face</span>
<span class="t" style="left:1357.19px;top:999.7px;height:32px;line-height:32px;font-size:26px;transform:scaleX(0.9124);font-weight:bold;-webkit-text-stroke-width:0.2px;">Master</span>
<span class="t" style="left:1462.26px;top:999.7px;height:32px;line-height:32px;font-size:26px;transform:scaleX(0.9369);font-weight:bold;-webkit-text-stroke-width:0.2px;">Roderick</span>
<span class="t" style="left:1593.77px;top:999.7px;height:32px;line-height:32px;font-size:26px;transform:scaleX(0.9165);font-weight:bold;-webkit-text-stroke-width:0.2px;">(206,</span>
<span class="t" style="left:1667.72px;top:999.7px;height:32px;line-height:32px;font-size:26px;transform:scaleX(0.8585);font-weight:bold;-webkit-text-stroke-width:0.2px;">133)</span>
<span class="t" style="left:1114.46px;top:1031.7px;height:32px;line-height:32px;font-size:26px;transform:scaleX(0.9215);color:#fde5a9;">Show</span>
<span class="t" style="left:1189.18px;top:1031.7px;height:32px;line-height:32px;font-size:26px;transform:scaleX(0.9335);color:#fde5a9;">dialogue</span>
<span class="t" style="left:1308.56px;top:1031.7px;height:32px;line-height:32px;font-size:26px;transform:scaleX(0.9367);font-weight:bold;-webkit-text-stroke-width:0.2px;color:#fde5a9;">BubbleAndBox</span>
<span class="t" style="left:1523.99px;top:1031.7px;height:32px;line-height:32px;font-size:26px;transform:scaleX(0.9146);color:#fde5a9;">over</span>
<span class="t" style="left:1590.59px;top:1031.7px;height:32px;line-height:32px;font-size:26px;transform:scaleX(0.9124);font-weight:bold;-webkit-text-stroke-width:0.2px;color:#fde5a9;">Master</span>
<span class="t" style="left:1695.66px;top:1031.7px;height:32px;line-height:32px;font-size:26px;transform:scaleX(0.9369);font-weight:bold;-webkit-text-stroke-width:0.2px;color:#fde5a9;">Roderick</span>
<span class="t" style="left:1827.17px;top:1031.7px;height:32px;line-height:32px;font-size:26px;transform:scaleX(0.9165);font-weight:bold;-webkit-text-stroke-width:0.2px;color:#fde5a9;">(206,</span>
<span class="t" style="left:1901.12px;top:1031.7px;height:32px;line-height:32px;font-size:26px;transform:scaleX(0.8585);font-weight:bold;-webkit-text-stroke-width:0.2px;color:#fde5a9;">133)</span>
<span class="t" style="left:1969.90px;top:1031.7px;height:32px;line-height:32px;font-size:26px;transform:scaleX(0.9467);color:#fde5a9;">with</span>
<span class="t" style="left:2032.64px;top:1031.7px;height:32px;line-height:32px;font-size:26px;transform:scaleX(0.9467);color:#fde5a9;">content</span>
<span class="t" style="left:2140.10px;top:1031.7px;height:32px;line-height:32px;font-size:26px;transform:scaleX(0.9330);font-weight:bold;-webkit-text-stroke-width:0.2px;color:#fde5a9;">The</span>
<span class="t" style="left:2200.16px;top:1031.7px;height:32px;line-height:32px;font-size:26px;transform:scaleX(0.9356);font-weight:bold;-webkit-text-stroke-width:0.2px;color:#fde5a9;">Keep</span>
<span class="t" style="left:2278.20px;top:1031.7px;height:32px;line-height:32px;font-size:26px;transform:scaleX(0.9526);font-weight:bold;-webkit-text-stroke-width:0.2px;color:#fde5a9;">already</span>
<span class="t" style="left:2389.14px;top:1031.7px;height:32px;line-height:32px;font-size:26px;transform:scaleX(0.9279);font-weight:bold;-webkit-text-stroke-width:0.2px;color:#fde5a9;">sta...</span>
<span class="t" style="left:2467.50px;top:1031.7px;height:32px;line-height:32px;font-size:26px;transform:scaleX(0.9501);color:#fde5a9;">using</span>
<span class="t" style="left:2547.97px;top:1031.7px;height:32px;line-height:32px;font-size:26px;transform:scaleX(0.9300);font-weight:bold;-webkit-text-stroke-width:0.2px;color:#fde5a9;">NULL</span>
<span class="t" style="left:2639.63px;top:1031.7px;height:32px;line-height:32px;font-size:26px;transform:scaleX(0.9334);color:#fde5a9;">voiceover</span>
<span class="t" style="left:2765.90px;top:1031.7px;height:32px;line-height:32px;font-size:26px;transform:scaleX(0.9315);color:#fde5a9;">sound.</span>
<span class="t" style="left:2855.25px;top:1031.7px;height:32px;line-height:32px;font-size:26px;transform:scaleX(0.9192);color:#fde5a9;">That</span>
<span class="t" style="left:2921.35px;top:1031.7px;height:32px;line-height:32px;font-size:26px;transform:scaleX(0.9515);font-weight:bold;-webkit-text-stroke-width:0.2px;color:#fde5a9;">IsSkippable</span>
<span class="t" style="left:3095.76px;top:1031.7px;height:32px;line-height:32px;font-size:26px;transform:scaleX(0.9200);color:#fde5a9;">. Modify duration by</span>
<span class="t" style="left:3355.87px;top:1031.7px;height:32px;line-height:32px;font-size:26px;transform:scaleX(0.9250);font-weight:bold;-webkit-text-stroke-width:0.2px;color:#fde5a9;">0</span>
<span class="t" style="left:3384.45px;top:1031.7px;height:32px;line-height:32px;font-size:26px;transform:scaleX(0.9451);color:#fde5a9;">seconds</span>
<span class="t" style="left:1114.46px;top:1063.7px;height:32px;line-height:32px;font-size:26px;transform:scaleX(0.9215);color:#fde5a9;">Show</span>
<span class="t" style="left:1189.18px;top:1063.7px;height:32px;line-height:32px;font-size:26px;transform:scaleX(0.9335);color:#fde5a9;">dialogue</span>
<span class="t" style="left:1308.56px;top:1063.7px;height:32px;line-height:32px;font-size:26px;transform:scaleX(0.9367);font-weight:bold;-webkit-text-stroke-width:0.2px;color:#fde5a9;">BubbleAndBox</span>
<span class="t" style="left:1523.99px;top:1063.7px;height:32px;line-height:32px;font-size:26px;transform:scaleX(0.9146);color:#fde5a9;">over</span>
<span class="t" style="left:1590.56px;top:1063.7px;height:32px;line-height:32px;font-size:26px;transform:scaleX(0.9391);font-weight:bold;-webkit-text-stroke-width:0.2px;color:#fde5a9;">Captain</span>
<span class="t" style="left:1707.60px;top:1063.7px;height:32px;line-height:32px;font-size:26px;transform:scaleX(0.9406);font-weight:bold;-webkit-text-stroke-width:0.2px;color:#fde5a9;">Thorne</span>
<span class="t" style="left:1815.02px;top:1063.7px;height:32px;line-height:32px;font-size:26px;transform:scaleX(0.8914);font-weight:bold;-webkit-text-stroke-width:0.2px;color:#fde5a9;">(226,</span>
<span class="t" style="left:1888.01px;top:1063.7px;height:32px;line-height:32px;font-size:26px;transform:scaleX(0.8634);font-weight:bold;-webkit-text-stroke-width:0.2px;color:#fde5a9;">145)</span>
<span class="t" style="left:1958.10px;top:1063.7px;height:32px;line-height:32px;font-size:26px;transform:scaleX(0.9467);color:#fde5a9;">with</span>
<span class="t" style="left:2020.84px;top:1063.7px;height:32px;line-height:32px;font-size:26px;transform:scaleX(0.9467);color:#fde5a9;">content</span>
<span class="t" style="left:2127.35px;top:1063.7px;height:32px;line-height:32px;font-size:26px;transform:scaleX(0.9485);font-weight:bold;-webkit-text-stroke-width:0.2px;color:#fde5a9;">Impressive,</span>
<span class="t" style="left:2295.62px;top:1063.7px;height:32px;line-height:32px;font-size:26px;transform:scaleX(0.9374);font-weight:bold;-webkit-text-stroke-width:0.2px;color:#fde5a9;">Roderick...</span>
<span class="t" style="left:2457.70px;top:1063.7px;height:32px;line-height:32px;font-size:26px;transform:scaleX(0.9501);color:#fde5a9;">using</span>
<span class="t" style="left:2538.17px;top:1063.7px;height:32px;line-height:32px;font-size:26px;transform:scaleX(0.9300);font-weight:bold;-webkit-text-stroke-width:0.2px;color:#fde5a9;">NULL</span>
<span class="t" style="left:2629.83px;top:1063.7px;height:32px;line-height:32px;font-size:26px;transform:scaleX(0.9334);color:#fde5a9;">voiceover</span>
<span class="t" style="left:2756.10px;top:1063.7px;height:32px;line-height:32px;font-size:26px;transform:scaleX(0.9315);color:#fde5a9;">sound.</span>
<span class="t" style="left:2845.45px;top:1063.7px;height:32px;line-height:32px;font-size:26px;transform:scaleX(0.9192);color:#fde5a9;">That</span>
<span class="t" style="left:2911.55px;top:1063.7px;height:32px;line-height:32px;font-size:26px;transform:scaleX(0.9515);font-weight:bold;-webkit-text-stroke-width:0.2px;color:#fde5a9;">IsSkippable</span>
<span class="t" style="left:3085.96px;top:1063.7px;height:32px;line-height:32px;font-size:26px;transform:scaleX(0.9200);color:#fde5a9;">. Modify duration by</span>
<span class="t" style="left:3346.07px;top:1063.7px;height:32px;line-height:32px;font-size:26px;transform:scaleX(0.9250);font-weight:bold;-webkit-text-stroke-width:0.2px;color:#fde5a9;">0</span>
<span class="t" style="left:3374.65px;top:1063.7px;height:32px;line-height:32px;font-size:26px;transform:scaleX(0.9451);color:#fde5a9;">seconds</span>
<span class="t" style="left:1115.36px;top:1095.7px;height:32px;line-height:32px;font-size:26px;transform:scaleX(0.9447);">Make</span>
<span class="t" style="left:1197.06px;top:1095.7px;height:32px;line-height:32px;font-size:26px;transform:scaleX(0.9391);font-weight:bold;-webkit-text-stroke-width:0.2px;">Captain</span>
<span class="t" style="left:1314.10px;top:1095.7px;height:32px;line-height:32px;font-size:26px;transform:scaleX(0.9406);font-weight:bold;-webkit-text-stroke-width:0.2px;">Thorne</span>
<span class="t" style="left:1421.52px;top:1095.7px;height:32px;line-height:32px;font-size:26px;transform:scaleX(0.8914);font-weight:bold;-webkit-text-stroke-width:0.2px;">(226,</span>
<span class="t" style="left:1494.51px;top:1095.7px;height:32px;line-height:32px;font-size:26px;transform:scaleX(0.8634);font-weight:bold;-webkit-text-stroke-width:0.2px;">145)</span>
<span class="t" style="left:1564.60px;top:1095.7px;height:32px;line-height:32px;font-size:26px;transform:scaleX(0.9052);">face</span>
<span class="t" style="left:1627.00px;top:1095.7px;height:32px;line-height:32px;font-size:26px;transform:scaleX(0.8964);font-weight:bold;-webkit-text-stroke-width:0.2px;">#Hero</span>
<span class="t" style="left:1115.36px;top:1127.7px;height:32px;line-height:32px;font-size:26px;transform:scaleX(0.9447);">Make</span>
<span class="t" style="left:1197.10px;top:1127.7px;height:32px;line-height:32px;font-size:26px;transform:scaleX(0.8964);font-weight:bold;-webkit-text-stroke-width:0.2px;">#Hero</span>
<span class="t" style="left:1294.80px;top:1127.7px;height:32px;line-height:32px;font-size:26px;transform:scaleX(0.9052);">face</span>
<span class="t" style="left:1357.16px;top:1127.7px;height:32px;line-height:32px;font-size:26px;transform:scaleX(0.9391);font-weight:bold;-webkit-text-stroke-width:0.2px;">Captain</span>
<span class="t" style="left:1474.20px;top:1127.7px;height:32px;line-height:32px;font-size:26px;transform:scaleX(0.9406);font-weight:bold;-webkit-text-stroke-width:0.2px;">Thorne</span>
<span class="t" style="left:1581.62px;top:1127.7px;height:32px;line-height:32px;font-size:26px;transform:scaleX(0.8914);font-weight:bold;-webkit-text-stroke-width:0.2px;">(226,</span>
<span class="t" style="left:1654.61px;top:1127.7px;height:32px;line-height:32px;font-size:26px;transform:scaleX(0.8634);font-weight:bold;-webkit-text-stroke-width:0.2px;">145)</span>
<span class="t" style="left:1114.46px;top:1159.7px;height:32px;line-height:32px;font-size:26px;transform:scaleX(0.9215);color:#fde5a9;">Show</span>
<span class="t" style="left:1189.18px;top:1159.7px;height:32px;line-height:32px;font-size:26px;transform:scaleX(0.9335);color:#fde5a9;">dialogue</span>
<span class="t" style="left:1308.56px;top:1159.7px;height:32px;line-height:32px;font-size:26px;transform:scaleX(0.9367);font-weight:bold;-webkit-text-stroke-width:0.2px;color:#fde5a9;">BubbleAndBox</span>
<span class="t" style="left:1523.99px;top:1159.7px;height:32px;line-height:32px;font-size:26px;transform:scaleX(0.9146);color:#fde5a9;">over</span>
<span class="t" style="left:1590.56px;top:1159.7px;height:32px;line-height:32px;font-size:26px;transform:scaleX(0.9391);font-weight:bold;-webkit-text-stroke-width:0.2px;color:#fde5a9;">Captain</span>
<span class="t" style="left:1707.60px;top:1159.7px;height:32px;line-height:32px;font-size:26px;transform:scaleX(0.9406);font-weight:bold;-webkit-text-stroke-width:0.2px;color:#fde5a9;">Thorne</span>
<span class="t" style="left:1815.02px;top:1159.7px;height:32px;line-height:32px;font-size:26px;transform:scaleX(0.8914);font-weight:bold;-webkit-text-stroke-width:0.2px;color:#fde5a9;">(226,</span>
<span class="t" style="left:1888.01px;top:1159.7px;height:32px;line-height:32px;font-size:26px;transform:scaleX(0.8634);font-weight:bold;-webkit-text-stroke-width:0.2px;color:#fde5a9;">145)</span>
<span class="t" style="left:1958.10px;top:1159.7px;height:32px;line-height:32px;font-size:26px;transform:scaleX(0.9467);color:#fde5a9;">with</span>
<span class="t" style="left:2020.84px;top:1159.7px;height:32px;line-height:32px;font-size:26px;transform:scaleX(0.9467);color:#fde5a9;">content</span>
<span class="t" style="left:2129.24px;top:1159.7px;height:32px;line-height:32px;font-size:26px;transform:scaleX(0.9441);font-weight:bold;-webkit-text-stroke-width:0.2px;color:#fde5a9;">Archmage,</span>
<span class="t" style="left:2286.17px;top:1159.7px;height:32px;line-height:32px;font-size:26px;transform:scaleX(0.9549);font-weight:bold;-webkit-text-stroke-width:0.2px;color:#fde5a9;">stop</span>
<span class="t" style="left:2354.50px;top:1159.7px;height:32px;line-height:32px;font-size:26px;transform:scaleX(0.9549);font-weight:bold;-webkit-text-stroke-width:0.2px;color:#fde5a9;">by</span>
<span class="t" style="left:2395.24px;top:1159.7px;height:32px;line-height:32px;font-size:26px;transform:scaleX(0.9225);font-weight:bold;-webkit-text-stroke-width:0.2px;color:#fde5a9;">la...</span>
<span class="t" style="left:2456.80px;top:1159.7px;height:32px;line-height:32px;font-size:26px;transform:scaleX(0.9501);color:#fde5a9;">using</span>
<span class="t" style="left:2537.27px;top:1159.7px;height:32px;line-height:32px;font-size:26px;transform:scaleX(0.9300);font-weight:bold;-webkit-text-stroke-width:0.2px;color:#fde5a9;">NULL</span>
<span class="t" style="left:2628.93px;top:1159.7px;height:32px;line-height:32px;font-size:26px;transform:scaleX(0.9334);color:#fde5a9;">voiceover</span>
<span class="t" style="left:2755.20px;top:1159.7px;height:32px;line-height:32px;font-size:26px;transform:scaleX(0.9315);color:#fde5a9;">sound.</span>
<span class="t" style="left:2844.55px;top:1159.7px;height:32px;line-height:32px;font-size:26px;transform:scaleX(0.9192);color:#fde5a9;">That</span>
<span class="t" style="left:2910.65px;top:1159.7px;height:32px;line-height:32px;font-size:26px;transform:scaleX(0.9515);font-weight:bold;-webkit-text-stroke-width:0.2px;color:#fde5a9;">IsSkippable</span>
<span class="t" style="left:3085.06px;top:1159.7px;height:32px;line-height:32px;font-size:26px;transform:scaleX(0.9200);color:#fde5a9;">. Modify duration by</span>
<span class="t" style="left:3345.17px;top:1159.7px;height:32px;line-height:32px;font-size:26px;transform:scaleX(0.9250);font-weight:bold;-webkit-text-stroke-width:0.2px;color:#fde5a9;">0</span>
<span class="t" style="left:3373.75px;top:1159.7px;height:32px;line-height:32px;font-size:26px;transform:scaleX(0.9451);color:#fde5a9;">seconds</span>
<span class="t" style="left:1115.36px;top:1191.7px;height:32px;line-height:32px;font-size:26px;transform:scaleX(0.9447);">Make</span>
<span class="t" style="left:1197.09px;top:1191.7px;height:32px;line-height:32px;font-size:26px;transform:scaleX(0.9124);font-weight:bold;-webkit-text-stroke-width:0.2px;">Master</span>
<span class="t" style="left:1302.16px;top:1191.7px;height:32px;line-height:32px;font-size:26px;transform:scaleX(0.9369);font-weight:bold;-webkit-text-stroke-width:0.2px;">Roderick</span>
<span class="t" style="left:1433.67px;top:1191.7px;height:32px;line-height:32px;font-size:26px;transform:scaleX(0.9165);font-weight:bold;-webkit-text-stroke-width:0.2px;">(206,</span>
<span class="t" style="left:1507.62px;top:1191.7px;height:32px;line-height:32px;font-size:26px;transform:scaleX(0.8585);font-weight:bold;-webkit-text-stroke-width:0.2px;">133)</span>
<span class="t" style="left:1576.40px;top:1191.7px;height:32px;line-height:32px;font-size:26px;transform:scaleX(0.9052);">face</span>
<span class="t" style="left:1638.80px;top:1191.7px;height:32px;line-height:32px;font-size:26px;transform:scaleX(0.8964);font-weight:bold;-webkit-text-stroke-width:0.2px;">#Hero</span>
<span class="t" style="left:1115.36px;top:1223.7px;height:32px;line-height:32px;font-size:26px;transform:scaleX(0.9447);">Make</span>
<span class="t" style="left:1197.10px;top:1223.7px;height:32px;line-height:32px;font-size:26px;transform:scaleX(0.8964);font-weight:bold;-webkit-text-stroke-width:0.2px;">#Hero</span>
<span class="t" style="left:1294.80px;top:1223.7px;height:32px;line-height:32px;font-size:26px;transform:scaleX(0.9052);">face</span>
<span class="t" style="left:1357.19px;top:1223.7px;height:32px;line-height:32px;font-size:26px;transform:scaleX(0.9124);font-weight:bold;-webkit-text-stroke-width:0.2px;">Master</span>
<span class="t" style="left:1462.26px;top:1223.7px;height:32px;line-height:32px;font-size:26px;transform:scaleX(0.9369);font-weight:bold;-webkit-text-stroke-width:0.2px;">Roderick</span>
<span class="t" style="left:1593.77px;top:1223.7px;height:32px;line-height:32px;font-size:26px;transform:scaleX(0.9165);font-weight:bold;-webkit-text-stroke-width:0.2px;">(206,</span>
<span class="t" style="left:1667.72px;top:1223.7px;height:32px;line-height:32px;font-size:26px;transform:scaleX(0.8585);font-weight:bold;-webkit-text-stroke-width:0.2px;">133)</span>
<span class="t" style="left:1114.51px;top:1255.7px;height:32px;line-height:32px;font-size:26px;transform:scaleX(0.8928);">Start</span>
<span class="t" style="left:1187.37px;top:1255.7px;height:32px;line-height:32px;font-size:26px;transform:scaleX(0.9269);font-weight:bold;-webkit-text-stroke-width:0.2px;">Heart</span>
<span class="t" style="left:1273.77px;top:1255.7px;height:32px;line-height:32px;font-size:26px;transform:scaleX(0.9430);font-weight:bold;-webkit-text-stroke-width:0.2px;">of</span>
<span class="t" style="left:1309.51px;top:1255.7px;height:32px;line-height:32px;font-size:26px;transform:scaleX(0.9430);font-weight:bold;-webkit-text-stroke-width:0.2px;">the</span>
<span class="t" style="left:1363.11px;top:1255.7px;height:32px;line-height:32px;font-size:26px;transform:scaleX(0.9234);font-weight:bold;-webkit-text-stroke-width:0.2px;">City</span>
<span class="t" style="left:1429.20px;top:1255.7px;height:32px;line-height:32px;font-size:26px;transform:scaleX(0.9013);">quest</span>
<span class="t" style="left:1115.36px;top:1287.7px;height:32px;line-height:32px;font-size:26px;transform:scaleX(0.9447);">Make</span>
<span class="t" style="left:1197.09px;top:1287.7px;height:32px;line-height:32px;font-size:26px;transform:scaleX(0.9124);font-weight:bold;-webkit-text-stroke-width:0.2px;">Master</span>
<span class="t" style="left:1302.16px;top:1287.7px;height:32px;line-height:32px;font-size:26px;transform:scaleX(0.9369);font-weight:bold;-webkit-text-stroke-width:0.2px;">Roderick</span>
<span class="t" style="left:1433.67px;top:1287.7px;height:32px;line-height:32px;font-size:26px;transform:scaleX(0.9165);font-weight:bold;-webkit-text-stroke-width:0.2px;">(206,</span>
<span class="t" style="left:1507.62px;top:1287.7px;height:32px;line-height:32px;font-size:26px;transform:scaleX(0.8585);font-weight:bold;-webkit-text-stroke-width:0.2px;">133)</span>
<span class="t" style="left:1576.40px;top:1287.7px;height:32px;line-height:32px;font-size:26px;transform:scaleX(0.9291);">unit</span>
<span class="t" style="left:1632.85px;top:1287.7px;height:32px;line-height:32px;font-size:26px;transform:scaleX(0.9291);">move</span>
<span class="t" style="left:1706.15px;top:1287.7px;height:32px;line-height:32px;font-size:26px;transform:scaleX(0.9291);">to</span>
<span class="t" style="left:1741.60px;top:1287.7px;height:32px;line-height:32px;font-size:26px;transform:scaleX(0.7986);font-weight:bold;-webkit-text-stroke-width:0.2px;">(211.51,</span>
<span class="t" style="left:1846.69px;top:1287.7px;height:32px;line-height:32px;font-size:26px;transform:scaleX(0.7943);font-weight:bold;-webkit-text-stroke-width:0.2px;">136.18)</span>
<span class="t" style="left:1948.93px;top:1287.7px;height:32px;line-height:32px;font-size:26px;transform:scaleX(0.9666);font-weight:bold;-webkit-text-stroke-width:0.2px;">Position</span>
<span class="t" style="left:2077.70px;top:1287.7px;height:32px;line-height:32px;font-size:26px;transform:scaleX(0.9480);">with</span>
<span class="t" style="left:2145.55px;top:1287.7px;height:32px;line-height:32px;font-size:26px;transform:scaleX(0.9532);font-weight:bold;-webkit-text-stroke-width:0.2px;">Normal</span>
<span class="t" style="left:2263.40px;top:1287.7px;height:32px;line-height:32px;font-size:26px;transform:scaleX(0.9314);">pace.</span>
<span class="t" style="left:2336.87px;top:1287.7px;height:32px;line-height:32px;font-size:26px;transform:scaleX(0.9164);">When</span>
<span class="t" style="left:2414.10px;top:1287.7px;height:32px;line-height:32px;font-size:26px;transform:scaleX(0.9323);">finished,</span>
<span class="t" style="left:2531.65px;top:1287.7px;height:32px;line-height:32px;font-size:26px;transform:scaleX(0.9486);font-weight:bold;-webkit-text-stroke-width:0.2px;">FaceDirection</span>
<span class="t" style="left:2737.18px;top:1287.7px;height:32px;line-height:32px;font-size:26px;transform:scaleX(0.8179);">of</span>
<span class="t" style="left:2770.96px;top:1287.7px;height:32px;line-height:32px;font-size:26px;transform:scaleX(0.8788);font-weight:bold;-webkit-text-stroke-width:0.2px;">180</span>
<span class="t" style="left:2830.60px;top:1287.7px;height:32px;line-height:32px;font-size:26px;transform:scaleX(0.9018);">degrees.</span>
<span class="t" style="left:1115.36px;top:1319.7px;height:32px;line-height:32px;font-size:26px;transform:scaleX(0.9447);">Make</span>
<span class="t" style="left:1197.09px;top:1319.7px;height:32px;line-height:32px;font-size:26px;transform:scaleX(0.9124);font-weight:bold;-webkit-text-stroke-width:0.2px;">Master</span>
<span class="t" style="left:1302.16px;top:1319.7px;height:32px;line-height:32px;font-size:26px;transform:scaleX(0.9369);font-weight:bold;-webkit-text-stroke-width:0.2px;">Roderick</span>
<span class="t" style="left:1433.67px;top:1319.7px;height:32px;line-height:32px;font-size:26px;transform:scaleX(0.9165);font-weight:bold;-webkit-text-stroke-width:0.2px;">(206,</span>
<span class="t" style="left:1507.62px;top:1319.7px;height:32px;line-height:32px;font-size:26px;transform:scaleX(0.8585);font-weight:bold;-webkit-text-stroke-width:0.2px;">133)</span>
<span class="t" style="left:1576.40px;top:1319.7px;height:32px;line-height:32px;font-size:26px;transform:scaleX(0.9291);">unit</span>
<span class="t" style="left:1632.85px;top:1319.7px;height:32px;line-height:32px;font-size:26px;transform:scaleX(0.9291);">move</span>
<span class="t" style="left:1706.15px;top:1319.7px;height:32px;line-height:32px;font-size:26px;transform:scaleX(0.9291);">to</span>
<span class="t" style="left:1741.51px;top:1319.7px;height:32px;line-height:32px;font-size:26px;transform:scaleX(0.8472);font-weight:bold;-webkit-text-stroke-width:0.2px;">(221.54,</span>
<span class="t" style="left:1852.99px;top:1319.7px;height:32px;line-height:32px;font-size:26px;transform:scaleX(0.8427);font-weight:bold;-webkit-text-stroke-width:0.2px;">142.50)</span>
<span class="t" style="left:1960.73px;top:1319.7px;height:32px;line-height:32px;font-size:26px;transform:scaleX(0.9666);font-weight:bold;-webkit-text-stroke-width:0.2px;">Position</span>
<span class="t" style="left:2089.50px;top:1319.7px;height:32px;line-height:32px;font-size:26px;transform:scaleX(0.9480);">with</span>
<span class="t" style="left:2157.35px;top:1319.7px;height:32px;line-height:32px;font-size:26px;transform:scaleX(0.9532);font-weight:bold;-webkit-text-stroke-width:0.2px;">Normal</span>
<span class="t" style="left:2275.20px;top:1319.7px;height:32px;line-height:32px;font-size:26px;transform:scaleX(0.9314);">pace.</span>
<span class="t" style="left:2348.67px;top:1319.7px;height:32px;line-height:32px;font-size:26px;transform:scaleX(0.9164);">When</span>
<span class="t" style="left:2425.90px;top:1319.7px;height:32px;line-height:32px;font-size:26px;transform:scaleX(0.9323);">finished,</span>
<span class="t" style="left:2543.45px;top:1319.7px;height:32px;line-height:32px;font-size:26px;transform:scaleX(0.9486);font-weight:bold;-webkit-text-stroke-width:0.2px;">FaceDirection</span>
<span class="t" style="left:2748.98px;top:1319.7px;height:32px;line-height:32px;font-size:26px;transform:scaleX(0.8179);">of</span>
<span class="t" style="left:2782.76px;top:1319.7px;height:32px;line-height:32px;font-size:26px;transform:scaleX(0.8788);font-weight:bold;-webkit-text-stroke-width:0.2px;">180</span>
<span class="t" style="left:2842.40px;top:1319.7px;height:32px;line-height:32px;font-size:26px;transform:scaleX(0.9018);">degrees.</span></div>
<svg style="position:absolute;left:3276.5px;top:179.6px;" width="40" height="38" viewBox="0 0 40 38"><circle cx="14.2" cy="14.2" r="10.9" fill="none" stroke="#fff" stroke-width="6"/><path d="M23 23 L29.8 29.2" stroke="#fff" stroke-width="8.6" stroke-linecap="round"/></svg>
<div style="position:absolute;left:3321px;top:175px;width:495px;height:42.6px;box-sizing:border-box;background:#282828;border:2px solid #202020;border-radius:6px;overflow:hidden"></div>
<span class="t" style="left:3279.91px;top:227.7px;height:48px;line-height:48px;font-size:26px;transform:scaleX(0.9141);">Activate</span>
<span class="t" style="left:3386.60px;top:227.7px;height:48px;line-height:48px;font-size:26px;transform:scaleX(0.9125);">Doodad</span>
<span class="t" style="left:3279.94px;top:275.7px;height:48px;line-height:48px;font-size:26px;transform:scaleX(0.9380);">Activate</span>
<span class="t" style="left:3389.41px;top:275.7px;height:48px;line-height:48px;font-size:26px;transform:scaleX(0.9347);">Entity</span>
<span class="t" style="left:3279.92px;top:323.7px;height:48px;line-height:48px;font-size:26px;transform:scaleX(0.9156);">Activate</span>
<span class="t" style="left:3386.78px;top:323.7px;height:48px;line-height:48px;font-size:26px;transform:scaleX(0.9106);">Quest</span>
<span class="t" style="left:3279.89px;top:371.7px;height:48px;line-height:48px;font-size:26px;transform:scaleX(0.8946);">Add</span>
<span class="t" style="left:3334.23px;top:371.7px;height:48px;line-height:48px;font-size:26px;transform:scaleX(0.8996);">Bleed</span>
<span class="t" style="left:3409.31px;top:371.7px;height:48px;line-height:48px;font-size:26px;transform:scaleX(0.9003);">Effect</span>
<span class="t" style="left:3279.91px;top:419.7px;height:48px;line-height:48px;font-size:26px;transform:scaleX(0.9124);">Add</span>
<span class="t" style="left:3335.33px;top:419.7px;height:48px;line-height:48px;font-size:26px;transform:scaleX(0.9216);">Building</span>
<span class="t" style="left:3445.39px;top:419.7px;height:48px;line-height:48px;font-size:26px;transform:scaleX(0.9044);">To</span>
<span class="t" style="left:3483.15px;top:419.7px;height:48px;line-height:48px;font-size:26px;transform:scaleX(0.9207);">Rooster</span>
<span class="t" style="left:3279.92px;top:467.7px;height:48px;line-height:48px;font-size:26px;transform:scaleX(0.9229);">Add</span>
<span class="t" style="left:3335.98px;top:467.7px;height:48px;line-height:48px;font-size:26px;transform:scaleX(0.9289);">Entity</span>
<span class="t" style="left:3417.95px;top:467.7px;height:48px;line-height:48px;font-size:26px;transform:scaleX(0.9147);">To</span>
<span class="t" style="left:3456.13px;top:467.7px;height:48px;line-height:48px;font-size:26px;transform:scaleX(0.9234);">List</span>
<span class="t" style="left:3279.90px;top:515.7px;height:48px;line-height:48px;font-size:26px;transform:scaleX(0.9007);">Add</span>
<span class="t" style="left:3334.60px;top:515.7px;height:48px;line-height:48px;font-size:26px;transform:scaleX(0.9058);">Health</span>
<span class="t" style="left:3423.09px;top:515.7px;height:48px;line-height:48px;font-size:26px;transform:scaleX(0.9068);">Regen</span>
<span class="t" style="left:3506.84px;top:515.7px;height:48px;line-height:48px;font-size:26px;transform:scaleX(0.9013);">Buff</span>
<span class="t" style="left:3279.89px;top:563.7px;height:48px;line-height:48px;font-size:26px;transform:scaleX(0.8928);">Add</span>
<span class="t" style="left:3334.12px;top:563.7px;height:48px;line-height:48px;font-size:26px;transform:scaleX(0.9008);">Into</span>
<span class="t" style="left:3389.71px;top:563.7px;height:48px;line-height:48px;font-size:26px;transform:scaleX(0.9019);">Storage</span>
<span class="t" style="left:3279.92px;top:611.7px;height:48px;line-height:48px;font-size:26px;transform:scaleX(0.9158);">Add</span>
<span class="t" style="left:3335.54px;top:611.7px;height:48px;line-height:48px;font-size:26px;transform:scaleX(0.9252);">Item</span>
<span class="t" style="left:3399.70px;top:611.7px;height:48px;line-height:48px;font-size:26px;transform:scaleX(0.9240);">Into</span>
<span class="t" style="left:3456.72px;top:611.7px;height:48px;line-height:48px;font-size:26px;transform:scaleX(0.9295);">Inventory</span>
<span class="t" style="left:3279.90px;top:659.7px;height:48px;line-height:48px;font-size:26px;transform:scaleX(0.8972);">Add</span>
<span class="t" style="left:3334.39px;top:659.7px;height:48px;line-height:48px;font-size:26px;transform:scaleX(0.9033);">Score</span>
<span class="t" style="left:3279.92px;top:707.7px;height:48px;line-height:48px;font-size:26px;transform:scaleX(0.9184);">Add</span>
<span class="t" style="left:3335.70px;top:707.7px;height:48px;line-height:48px;font-size:26px;transform:scaleX(0.9256);">Sound</span>
<span class="t" style="left:3421.05px;top:707.7px;height:48px;line-height:48px;font-size:26px;transform:scaleX(0.9103);">To</span>
<span class="t" style="left:3459.05px;top:707.7px;height:48px;line-height:48px;font-size:26px;transform:scaleX(0.9189);">List</span>
<span class="t" style="left:3279.91px;top:755.7px;height:48px;line-height:48px;font-size:26px;transform:scaleX(0.9058);">Add</span>
<span class="t" style="left:3334.92px;top:755.7px;height:48px;line-height:48px;font-size:26px;transform:scaleX(0.9093);">Stun</span>
<span class="t" style="left:3398.93px;top:755.7px;height:48px;line-height:48px;font-size:26px;transform:scaleX(0.9116);">Effect</span>
<span class="t" style="left:3279.93px;top:803.7px;height:48px;line-height:48px;font-size:26px;transform:scaleX(0.9293);">Add</span>
<span class="t" style="left:3336.37px;top:803.7px;height:48px;line-height:48px;font-size:26px;transform:scaleX(0.9390);">Tutorial</span>
<span class="t" style="left:3279.92px;top:851.7px;height:48px;line-height:48px;font-size:26px;transform:scaleX(0.9200);">Add</span>
<span class="t" style="left:3335.80px;top:851.7px;height:48px;line-height:48px;font-size:26px;transform:scaleX(0.9190);">Unit</span>
<span class="t" style="left:3396.55px;top:851.7px;height:48px;line-height:48px;font-size:26px;transform:scaleX(0.9119);">To</span>
<span class="t" style="left:3434.62px;top:851.7px;height:48px;line-height:48px;font-size:26px;transform:scaleX(0.9313);">Formation</span>
<span class="t" style="left:3279.90px;top:899.7px;height:48px;line-height:48px;font-size:26px;transform:scaleX(0.9021);">Attach</span>
<span class="t" style="left:3365.68px;top:899.7px;height:48px;line-height:48px;font-size:26px;transform:scaleX(0.9036);">Special</span>
<span class="t" style="left:3460.67px;top:899.7px;height:48px;line-height:48px;font-size:26px;transform:scaleX(0.9009);">Effect</span>
<span class="t" style="left:3279.91px;top:947.7px;height:48px;line-height:48px;font-size:26px;transform:scaleX(0.9078);">Attach</span>
<span class="t" style="left:3366.23px;top:947.7px;height:48px;line-height:48px;font-size:26px;transform:scaleX(0.9094);">Special</span>
<span class="t" style="left:3461.84px;top:947.7px;height:48px;line-height:48px;font-size:26px;transform:scaleX(0.9067);">Effect</span>
<span class="t" style="left:3540.94px;top:947.7px;height:48px;line-height:48px;font-size:26px;transform:scaleX(0.9103);">Between</span>
<span class="t" style="left:3653.17px;top:947.7px;height:48px;line-height:48px;font-size:26px;transform:scaleX(0.9093);">Entities</span>
<span class="t" style="left:3279.93px;top:995.7px;height:48px;line-height:48px;font-size:26px;transform:scaleX(0.9296);">Attack</span>
<span class="t" style="left:3367.41px;top:995.7px;height:48px;line-height:48px;font-size:26px;transform:scaleX(0.9223);">Move</span>
<span class="t" style="left:3442.14px;top:995.7px;height:48px;line-height:48px;font-size:26px;transform:scaleX(0.9323);">Position</span>
<span class="t" style="left:3279.92px;top:1043.7px;height:48px;line-height:48px;font-size:26px;transform:scaleX(0.9178);">Attack</span>
<span class="t" style="left:3366.28px;top:1043.7px;height:48px;line-height:48px;font-size:26px;transform:scaleX(0.9189);">Target</span>
<span class="t" style="left:3278.08px;top:1091.7px;height:48px;line-height:48px;font-size:26px;transform:scaleX(0.9166);">Change</span>
<span class="t" style="left:3378.46px;top:1091.7px;height:48px;line-height:48px;font-size:26px;transform:scaleX(0.9146);">Entity</span>
<span class="t" style="left:3459.17px;top:1091.7px;height:48px;line-height:48px;font-size:26px;transform:scaleX(0.9147);">Material</span>
<span class="t" style="left:3278.08px;top:1139.7px;height:48px;line-height:48px;font-size:26px;transform:scaleX(0.9241);">Change</span>
<span class="t" style="left:3379.27px;top:1139.7px;height:48px;line-height:48px;font-size:26px;transform:scaleX(0.9221);">Team</span>
<span class="t" style="left:3278.10px;top:1187.7px;height:48px;line-height:48px;font-size:26px;transform:scaleX(0.8990);">Clear</span>
<span class="t" style="left:3350.17px;top:1187.7px;height:48px;line-height:48px;font-size:26px;transform:scaleX(0.9041);">Building</span>
<span class="t" style="left:3458.13px;top:1187.7px;height:48px;line-height:48px;font-size:26px;transform:scaleX(0.9032);">Rooster</span>
<span class="t" style="left:3278.09px;top:1235.7px;height:48px;line-height:48px;font-size:26px;transform:scaleX(0.9101);">Clear</span>
<span class="t" style="left:3351.04px;top:1235.7px;height:48px;line-height:48px;font-size:26px;transform:scaleX(0.9016);">Map</span>
<span class="t" style="left:3411.89px;top:1235.7px;height:48px;line-height:48px;font-size:26px;transform:scaleX(0.9091);">Link</span>
<span class="t" style="left:3278.07px;top:1283.7px;height:48px;line-height:48px;font-size:26px;transform:scaleX(0.9340);">Comment</span>
<span class="t" style="left:3278.10px;top:1331.7px;height:48px;line-height:48px;font-size:26px;transform:scaleX(0.8974);">Complete</span>
<span class="t" style="left:3399.22px;top:1331.7px;height:48px;line-height:48px;font-size:26px;transform:scaleX(0.8918);">Quest</span>
<span class="t" style="left:3278.09px;top:1379.7px;height:48px;line-height:48px;font-size:26px;transform:scaleX(0.9144);">Complete</span>
<span class="t" style="left:3401.49px;top:1379.7px;height:48px;line-height:48px;font-size:26px;transform:scaleX(0.9086);">Quest</span>
<span class="t" style="left:3479.52px;top:1379.7px;height:48px;line-height:48px;font-size:26px;transform:scaleX(0.9084);">Task</span>
<span class="t" style="left:3278.06px;top:1427.7px;height:48px;line-height:48px;font-size:26px;transform:scaleX(0.9363);">Conditional</span>
<span class="t" style="left:3428.63px;top:1427.7px;height:48px;line-height:48px;font-size:26px;transform:scaleX(0.9318);">Action</span>
<span class="t" style="left:3278.10px;top:1475.7px;height:48px;line-height:48px;font-size:26px;transform:scaleX(0.8966);">Create</span>
<span class="t" style="left:3365.67px;top:1475.7px;height:48px;line-height:48px;font-size:26px;transform:scaleX(0.8959);">Entity</span>
<span class="t" style="left:3278.10px;top:1523.7px;height:48px;line-height:48px;font-size:26px;transform:scaleX(0.9005);">Create</span>
<span class="t" style="left:3366.03px;top:1523.7px;height:48px;line-height:48px;font-size:26px;transform:scaleX(0.9049);">Formation</span>
<span class="t" style="left:3278.09px;top:1571.7px;height:48px;line-height:48px;font-size:26px;transform:scaleX(0.9133);">Create</span>
<span class="t" style="left:3367.27px;top:1571.7px;height:48px;line-height:48px;font-size:26px;transform:scaleX(0.9130);">Minimap</span>
<span class="t" style="left:3481.77px;top:1571.7px;height:48px;line-height:48px;font-size:26px;transform:scaleX(0.9109);">Marker</span>
<span class="t" style="left:3579.02px;top:1571.7px;height:48px;line-height:48px;font-size:26px;transform:scaleX(0.8929);">At</span>
<span class="t" style="left:3612.98px;top:1571.7px;height:48px;line-height:48px;font-size:26px;transform:scaleX(0.9124);">Owner</span>
<span class="t" style="left:3278.08px;top:1619.7px;height:48px;line-height:48px;font-size:26px;transform:scaleX(0.9167);">Create</span>
<span class="t" style="left:3367.60px;top:1619.7px;height:48px;line-height:48px;font-size:26px;transform:scaleX(0.9165);">Minimap</span>
<span class="t" style="left:3482.54px;top:1619.7px;height:48px;line-height:48px;font-size:26px;transform:scaleX(0.9144);">Marker</span>
<span class="t" style="left:3580.15px;top:1619.7px;height:48px;line-height:48px;font-size:26px;transform:scaleX(0.8963);">At</span>
<span class="t" style="left:3614.24px;top:1619.7px;height:48px;line-height:48px;font-size:26px;transform:scaleX(0.9195);">Position</span>
<span class="t" style="left:3278.09px;top:1667.7px;height:48px;line-height:48px;font-size:26px;transform:scaleX(0.9080);">Create</span>
<span class="t" style="left:3366.76px;top:1667.7px;height:48px;line-height:48px;font-size:26px;transform:scaleX(0.9108);">Position</span>
<span class="t" style="left:3471.09px;top:1667.7px;height:48px;line-height:48px;font-size:26px;transform:scaleX(0.9004);">In</span>
<span class="t" style="left:3503.24px;top:1667.7px;height:48px;line-height:48px;font-size:26px;transform:scaleX(0.9083);">Radius</span>
<span class="t" style="left:3278.10px;top:1715.7px;height:48px;line-height:48px;font-size:26px;transform:scaleX(0.8982);">Create</span>
<span class="t" style="left:3365.82px;top:1715.7px;height:48px;line-height:48px;font-size:26px;transform:scaleX(0.9010);">Position</span>
<span class="t" style="left:3469.03px;top:1715.7px;height:48px;line-height:48px;font-size:26px;transform:scaleX(0.8907);">In</span>
<span class="t" style="left:3500.83px;top:1715.7px;height:48px;line-height:48px;font-size:26px;transform:scaleX(0.8988);">Region</span>
<span class="t" style="left:3278.09px;top:1763.7px;height:48px;line-height:48px;font-size:26px;transform:scaleX(0.9059);">Create</span>
<span class="t" style="left:3366.56px;top:1763.7px;height:48px;line-height:48px;font-size:26px;transform:scaleX(0.9087);">Position</span>
<span class="t" style="left:3470.65px;top:1763.7px;height:48px;line-height:48px;font-size:26px;transform:scaleX(0.8897);">On</span>
<span class="t" style="left:3512.31px;top:1763.7px;height:48px;line-height:48px;font-size:26px;transform:scaleX(0.8948);">Map</span>
<span class="t" style="left:3278.10px;top:1811.7px;height:48px;line-height:48px;font-size:26px;transform:scaleX(0.9029);">Create</span>
<span class="t" style="left:3366.27px;top:1811.7px;height:48px;line-height:48px;font-size:26px;transform:scaleX(0.9050);">Random</span>
<span class="t" style="left:3472.48px;top:1811.7px;height:48px;line-height:48px;font-size:26px;transform:scaleX(0.9009);">Float</span>
<span class="t" style="left:3278.11px;top:1859.7px;height:48px;line-height:48px;font-size:26px;transform:scaleX(0.8940);">Create</span>
<span class="t" style="left:3365.41px;top:1859.7px;height:48px;line-height:48px;font-size:26px;transform:scaleX(0.8960);">Random</span>
<span class="t" style="left:3470.57px;top:1859.7px;height:48px;line-height:48px;font-size:26px;transform:scaleX(0.8996);">Integer</span>
<span class="t" style="left:3278.11px;top:1907.7px;height:48px;line-height:48px;font-size:26px;transform:scaleX(0.8880);">Deal</span>
<span class="t" style="left:3339.13px;top:1907.7px;height:48px;line-height:48px;font-size:26px;transform:scaleX(0.8954);">Damage</span>
<span class="t" style="left:3278.11px;top:1955.7px;height:48px;line-height:48px;font-size:26px;transform:scaleX(0.8868);">Deal</span>
<span class="t" style="left:3339.05px;top:1955.7px;height:48px;line-height:48px;font-size:26px;transform:scaleX(0.8977);">Percentage</span>
<span class="t" style="left:3481.37px;top:1955.7px;height:48px;line-height:48px;font-size:26px;transform:scaleX(0.8941);">Damage</span>
<span class="t" style="left:3278.10px;top:2003.7px;height:48px;line-height:48px;font-size:26px;transform:scaleX(0.9030);">Log</span>
<span class="t" style="left:3330.68px;top:2003.7px;height:48px;line-height:48px;font-size:26px;transform:scaleX(0.9087);">Message</span>
<span class="t" style="left:3278.09px;top:2051.7px;height:48px;line-height:48px;font-size:26px;transform:scaleX(0.9137);">Destroy</span>
<span class="t" style="left:3379.87px;top:2051.7px;height:48px;line-height:48px;font-size:26px;transform:scaleX(0.9120);">Entity</span>
<span class="t" style="left:3278.08px;top:2099.7px;height:48px;line-height:48px;font-size:26px;transform:scaleX(0.9194);">Disband</span>
<span class="t" style="left:3385.31px;top:2099.7px;height:48px;line-height:48px;font-size:26px;transform:scaleX(0.9224);">Formation</span>
<div style="position:absolute;left:3794px;top:227.5px;width:30.5px;height:1925px;background:#373737;box-sizing:border-box;border:2px solid #333"></div>
<svg style="position:absolute;left:3803.3px;top:237px;" width="11.6" height="11.4" viewBox="0 0 11.6 11.4"><path fill="#fff" d="M5.8 0 L11.6 11.4 L0 11.4 Z"/></svg>
<svg style="position:absolute;left:3803.3px;top:2124px;" width="11.6" height="11.4" viewBox="0 0 11.6 11.4"><path fill="#fff" d="M0 0 L11.6 0 L5.8 11.4 Z"/></svg>
<div style="position:absolute;left:3795.2px;top:255px;width:28px;height:352px;background:#777777;border-radius:6px"></div>
</div>
</body></html>
